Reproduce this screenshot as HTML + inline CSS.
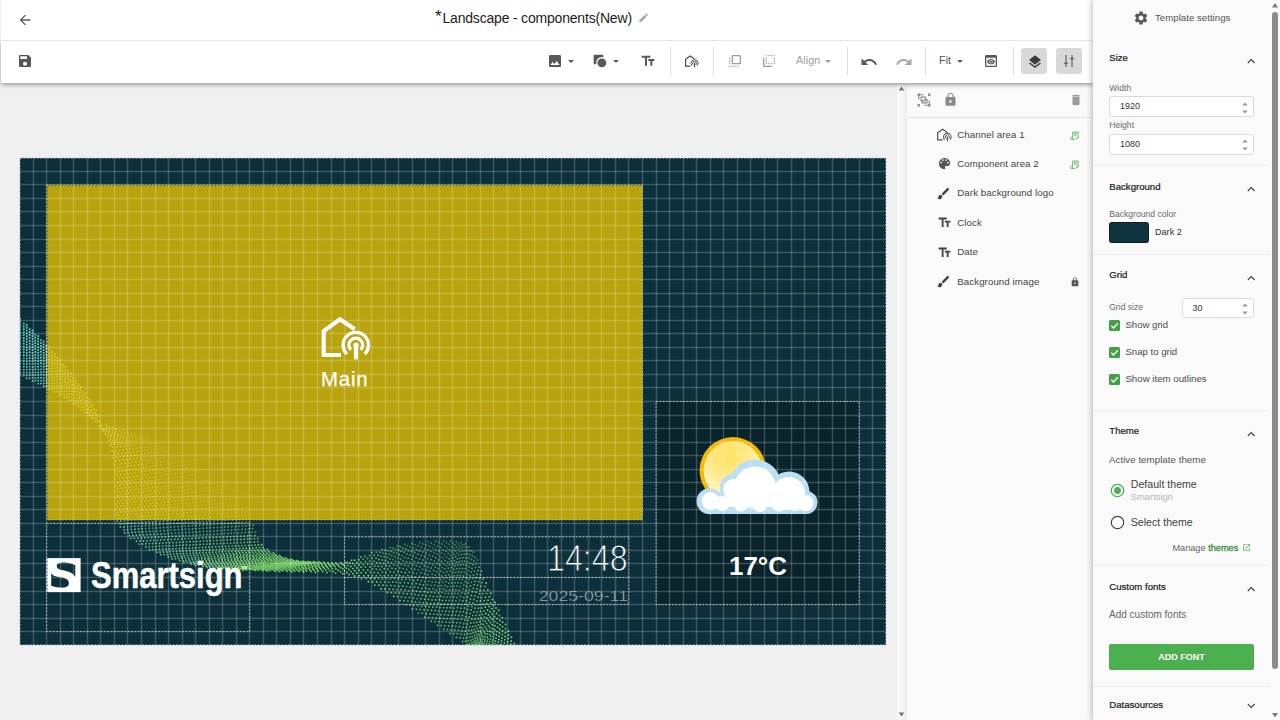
<!DOCTYPE html>
<html lang="en">
<head>
<meta charset="utf-8">
<title>Landscape - components(New)</title>
<style>
*{box-sizing:border-box;margin:0;padding:0}
html,body{width:1280px;height:720px;overflow:hidden}
body{position:relative;background:#f0f0f0;font-family:"Liberation Sans",Arial,sans-serif;color:#333;font-size:12px}
.abs{position:absolute}
svg{display:block}
/* ---------- top bars ---------- */
#topbar{left:1px;top:0;width:1092px;height:40px;background:#fff}
#topline{left:1px;top:40px;width:1092px;height:1px;background:#e6e6e6}
#toolbar{left:1px;top:41px;width:1092px;height:42px;background:#fff;box-shadow:0 2px 4px rgba(0,0,0,.35)}
#title{left:435px;top:6px;height:24px;line-height:24px;font-size:14px;letter-spacing:-.19px;color:#1c1c1c;white-space:nowrap}
.ic{position:absolute;fill:#585858}
.sep{position:absolute;top:47px;width:1px;height:28px;background:#dcdcdc}
.tbtn{position:absolute;top:48px;width:26px;height:26px;border-radius:3px;background:#d9d9d9}
.ttxt{position:absolute;top:51px;height:18px;line-height:18px;font-size:10.8px;letter-spacing:.05px;color:#555;white-space:nowrap}
.caret{position:absolute;width:0;height:0;margin-left:.5px;border-left:3.5px solid transparent;border-right:3.5px solid transparent;border-top:3.8px solid #5c5c5c}
/* ---------- canvas ---------- */
#vscroll{left:897px;top:84px;width:10px;height:636px;background:linear-gradient(to right,#fafafa 0,#f7f7f7 55%,#e9e9e9 100%)}
#stage{left:19.6px;top:157.6px;width:1920px;height:1080px;transform-origin:0 0;transform:scale(.45104);background:#0c303c;overflow:hidden}
#stage .box{position:absolute}
#grid{position:absolute;left:0;top:0;width:1920px;height:1080px}
.outl{position:absolute;border:2.2px dashed rgba(255,255,255,.75)}
/* ---------- layers ---------- */
#layers{left:907px;top:84px;width:186px;height:636px;background:#fafafa}
#layline{left:907px;top:117px;width:186px;height:1px;background:#e4e4e4}
.lrow{position:absolute;left:957.3px;height:16px;line-height:16px;font-size:9.7px;letter-spacing:.08px;color:#454545;white-space:nowrap}
/* ---------- settings ---------- */
#panel{left:1093px;top:0;width:177px;height:720px;background:#fafafa;box-shadow:-2px 0 5px rgba(0,0,0,.22)}
#pscroll{left:1270px;top:0;width:10px;height:720px;background:#fbfbfb}
#pthumb{left:1272px;top:12px;width:6px;height:657px;background:#8c8c8c;border-radius:3px}
.ptitle{position:absolute;left:1109.3px;font-size:9.6px;-webkit-text-stroke:.22px #222;color:#222;height:14px;line-height:14px;white-space:nowrap}
.plabel{position:absolute;left:1109.2px;font-size:8.6px;color:#6a6a6a;height:12px;line-height:12px;white-space:nowrap}
.ptext{position:absolute;font-size:10.5px;color:#4c4c4c;height:14px;line-height:14px;white-space:nowrap}
.pline{position:absolute;left:1093px;width:177px;height:1px;background:#ededed}
.pin{position:absolute;background:#fff;border:1px solid #dadada;border-radius:3px;font-size:9px;color:#333;line-height:19px;padding-left:10px}
.chev{position:absolute;left:1246px;width:10px;height:6px}
.spin{position:absolute;width:8px;height:14px}
.chk{position:absolute;left:1109px;width:11px;height:11px;background:#43a047;border-radius:1.5px}
</style>
</head>
<body>
<!-- ================= canvas area ================= -->
<div class="abs" id="vscroll"></div>
<svg class="abs" style="left:898.3px;top:85.6px" width="7" height="5" viewBox="0 0 8 6"><path d="M4 0.5 7.5 5.5H0.5z" fill="#777"/></svg>
<svg class="abs" style="left:898.3px;top:711.5px" width="7" height="5" viewBox="0 0 8 6"><path d="M0.5 0.5H7.5L4 5.5z" fill="#777"/></svg>

<svg class="abs" style="left:0;top:0" width="1280" height="720" viewBox="0 0 1280 720">
<defs>
<clipPath id="cs"><rect x="19.65" y="157.8" width="866.55" height="487.44"/></clipPath>
<radialGradient id="sun" cx=".42" cy=".25" r=".8"><stop offset="0" stop-color="#ffe35a"/><stop offset=".45" stop-color="#ffe88a"/><stop offset="1" stop-color="#fffbe6"/></radialGradient>
<linearGradient id="wv" gradientUnits="userSpaceOnUse" x1="20" y1="0" x2="260" y2="0"><stop offset="0" stop-color="#72d6c8"/><stop offset=".4" stop-color="#78d2a0"/><stop offset="1" stop-color="#70c860"/></linearGradient>
</defs>
<g clip-path="url(#cs)">
<rect x="19.65" y="157.8" width="866.55" height="487.44" fill="#0c303b"/>
<path d="M150.7 438.4h0M154.3 440.6h0M150.7 440.9h0M157.9 443h0M154.2 443.4h0M161.9 445.4h0M158.4 445.8h0M169.1 447.6h0M165.5 448h0M173.1 450.2h0M169.6 450.7h0M180.1 452.5h0M176.5 452.9h0M172.9 453.4h0M183.2 455.2h0M179.6 455.7h0M176 456.2h0M186.1 458.1h0M182.5 458.6h0M178.8 459.1h0M192.9 460.5h0M189.3 461h0M185.8 461.5h0M182.2 462h0M195.5 463.6h0M191.9 464.1h0M188.3 464.6h0M197.9 466.9h0M194.3 467.4h0M190.8 468h0M203.6 469.7h0M200 470.3h0M196.4 470.8h0M192.9 471.3h0M212.5 472.2h0M209 472.7h0M205.4 473.2h0M201.8 473.7h0M198.3 474.2h0M217.5 475.3h0M213.8 475.8h0M210.1 476.2h0M206.4 476.7h0M222.3 478.3h0M218.6 478.8h0M214.9 479.3h0M211.3 479.7h0M223.2 481.9h0M219.6 482.3h0M227.7 485h0" fill="none" stroke="url(#wv)" stroke-opacity="0.17" stroke-width="1.95" stroke-linecap="round"/>
<path d="M146.8 436.5h0M143.4 436.9h0M147.1 438.8h0M143.6 439.2h0M147.1 441.3h0M143.4 441.7h0M150.5 443.7h0M146.7 444.1h0M143 444.5h0M154.8 446.2h0M151.3 446.6h0M147.7 447h0M161.9 448.5h0M158.2 448.9h0M154.6 449.3h0M150.9 449.7h0M166 451.1h0M162.5 451.5h0M159 452h0M155.5 452.4h0M169.3 453.9h0M165.7 454.4h0M162.1 454.8h0M158.6 455.3h0M172.3 456.7h0M168.7 457.2h0M165.1 457.7h0M161.4 458.2h0M175.1 459.7h0M171.5 460.2h0M167.8 460.7h0M164.1 461.2h0M178.7 462.6h0M175.2 463.1h0M171.6 463.6h0M168.1 464.1h0M164.6 464.6h0M184.8 465.2h0M181.2 465.7h0M177.7 466.2h0M174.1 466.8h0M170.5 467.3h0M167 467.8h0M187.2 468.5h0M183.6 469h0M180 469.5h0M176.5 470.1h0M172.9 470.6h0M169.3 471.1h0M189.3 471.8h0M185.7 472.3h0M182.2 472.9h0M178.6 473.4h0M175 473.9h0M171.4 474.4h0M194.7 474.7h0M191.1 475.2h0M187.6 475.7h0M184 476.2h0M180.4 476.7h0M176.9 477.2h0M202.7 477.2h0M199.1 477.7h0M195.4 478.2h0M191.7 478.7h0M188 479.2h0M184.3 479.7h0M180.6 480.2h0M207.6 480.2h0M204 480.7h0M200.3 481.2h0M196.6 481.6h0M193 482.1h0M189.3 482.6h0M185.7 483h0M216 482.7h0M212.3 483.2h0M208.7 483.6h0M205.1 484.1h0M201.4 484.5h0M197.8 485h0M194.1 485.4h0M190.5 485.9h0M224.1 485.4h0M220.5 485.8h0M216.9 486.2h0M213.3 486.7h0M209.6 487.1h0M206 487.5h0M202.4 487.9h0M198.8 488.3h0M195.2 488.8h0M228.4 488.5h0M224.8 488.9h0M221.3 489.3h0M217.7 489.7h0M214.1 490.1h0M210.5 490.5h0M206.9 490.9h0M203.4 491.3h0M199.8 491.7h0M232.6 491.7h0M229 492.1h0M225.3 492.4h0M221.7 492.8h0M218 493.2h0M214.3 493.6h0M210.7 494h0M207 494.4h0M203.4 494.7h0M233.2 495.2h0M229.5 495.6h0M225.9 495.9h0M222.3 496.3h0M218.7 496.6h0M215.1 497h0M211.5 497.4h0M237.3 498.4h0M233.6 498.8h0M229.9 499.1h0M226.2 499.4h0M222.5 499.8h0M218.8 500.1h0M237.7 501.9h0M234 502.3h0M230.4 502.6h0M226.8 502.9h0M241.7 505.1h0M238.1 505.4h0M234.5 505.7h0" fill="none" stroke="url(#wv)" stroke-opacity="0.33" stroke-width="1.95" stroke-linecap="round"/>
<path d="M135.2 433.3h0M131.7 433.8h0M139.2 435.1h0M135.6 435.5h0M131.9 435.9h0M139.9 437.2h0M136.5 437.6h0M133.1 438h0M140 439.5h0M136.5 439.9h0M133 440.3h0M139.8 442.1h0M136.2 442.4h0M132.5 442.8h0M139.3 444.9h0M135.6 445.3h0M144.1 447.4h0M140.6 447.8h0M137 448.2h0M147.3 450.1h0M143.7 450.6h0M140 451h0M152 452.8h0M148.5 453.3h0M145 453.7h0M141.4 454.2h0M155 455.8h0M151.4 456.3h0M147.8 456.7h0M144.2 457.2h0M157.8 458.8h0M154.2 459.3h0M150.5 459.8h0M146.9 460.3h0M143.3 460.8h0M160.5 461.8h0M156.8 462.3h0M153.1 462.8h0M149.5 463.4h0M145.8 463.9h0M161 465.2h0M157.5 465.7h0M153.9 466.2h0M150.4 466.7h0M146.9 467.2h0M163.4 468.4h0M159.9 468.9h0M156.3 469.4h0M152.8 469.9h0M149.2 470.5h0M165.7 471.7h0M162.2 472.2h0M158.6 472.7h0M155 473.2h0M151.5 473.8h0M147.9 474.3h0M167.9 474.9h0M164.3 475.5h0M160.7 476h0M157.1 476.5h0M153.6 477h0M150 477.5h0M173.3 477.7h0M169.7 478.2h0M166.2 478.8h0M162.6 479.3h0M159 479.8h0M155.5 480.3h0M151.9 480.8h0M177 480.7h0M173.3 481.2h0M169.6 481.7h0M165.9 482.2h0M162.2 482.7h0M158.6 483.2h0M154.9 483.7h0M182 483.5h0M178.4 484h0M174.7 484.5h0M171 484.9h0M167.4 485.4h0M163.7 485.9h0M160.1 486.4h0M156.4 486.8h0M186.9 486.3h0M183.2 486.8h0M179.6 487.2h0M176 487.7h0M172.3 488.1h0M168.7 488.6h0M165.1 489h0M161.4 489.5h0M191.6 489.2h0M188 489.6h0M184.4 490h0M180.8 490.5h0M177.2 490.9h0M173.6 491.3h0M170 491.7h0M166.4 492.1h0M162.7 492.6h0M196.2 492.1h0M192.6 492.5h0M189.1 492.9h0M185.5 493.3h0M181.9 493.7h0M178.3 494.1h0M174.7 494.5h0M171.2 494.9h0M167.6 495.3h0M164 495.7h0M199.7 495.1h0M196.1 495.5h0M192.4 495.9h0M188.7 496.3h0M185.1 496.7h0M181.4 497h0M177.8 497.4h0M174.1 497.8h0M170.4 498.2h0M166.8 498.6h0M207.8 497.7h0M204.2 498.1h0M200.6 498.4h0M197 498.8h0M193.4 499.2h0M189.7 499.5h0M186.1 499.9h0M182.5 500.2h0M178.9 500.6h0M175.3 500.9h0M171.6 501.3h0M215.1 500.5h0M211.4 500.8h0M207.8 501.2h0M204.1 501.5h0M200.4 501.8h0M196.7 502.2h0M193 502.5h0M189.3 502.9h0M185.6 503.2h0M181.9 503.6h0M178.3 503.9h0M174.6 504.2h0M223.1 503.2h0M219.5 503.5h0M215.8 503.9h0M212.2 504.2h0M208.5 504.5h0M204.9 504.8h0M201.3 505.1h0M197.6 505.4h0M194 505.8h0M190.3 506.1h0M186.7 506.4h0M183.1 506.7h0M179.4 507h0M230.9 506h0M227.3 506.3h0M223.7 506.6h0M220.1 506.9h0M216.5 507.2h0M213 507.5h0M209.4 507.8h0M205.8 508.1h0M202.2 508.4h0M198.6 508.7h0M195 509h0M191.4 509.3h0M187.8 509.6h0M184.2 509.9h0M242 508.6h0M238.4 508.9h0M234.7 509.2h0M231.1 509.5h0M227.5 509.8h0M223.8 510.1h0M220.2 510.3h0M216.6 510.6h0M212.9 510.9h0M209.3 511.2h0M205.6 511.5h0M202 511.7h0M198.4 512h0M194.7 512.3h0M191.1 512.6h0M246 511.8h0M242.3 512.1h0M238.6 512.4h0M234.9 512.7h0M231.3 512.9h0M227.6 513.2h0M223.9 513.5h0M220.2 513.7h0M216.6 514h0M212.9 514.3h0M209.2 514.5h0M205.5 514.8h0M201.9 515.1h0M198.2 515.3h0M246.3 515.3h0M242.7 515.5h0M239.1 515.8h0M235.5 516h0M231.9 516.3h0M228.3 516.5h0M224.7 516.8h0M221.1 517h0M217.5 517.3h0M213.9 517.5h0M210.3 517.8h0M206.7 518h0M250.1 518.5h0M246.5 518.8h0M242.9 519h0M239.3 519.3h0M235.7 519.5h0M232.1 519.7h0M228.5 520h0M224.9 520.2h0M221.3 520.4h0M250 522h0M246.4 522.3h0M242.8 522.5h0M404.7 544.5h0M407.4 545.6h0M411.9 543.4h0M410.2 546.9h0M414.8 544.6h0M413.2 548.1h0M419.6 542.4h0M418 545.8h0M416.4 549.2h0M422.8 543.7h0M421.1 547.3h0M427.7 541.6h0M426.1 545h0M424.5 548.5h0M431 542.9h0M429.4 546.3h0M427.8 549.7h0M435.9 540.9h0M434.2 544.4h0M432.6 548h0M430.9 551.5h0M439 542.4h0M437.4 545.9h0M435.8 549.4h0M434.2 552.9h0M443.6 540.6h0M442 544h0M440.5 547.4h0M438.9 550.9h0M437.4 554.3h0M446.4 542.4h0M444.8 545.9h0M443.2 549.4h0M441.6 553h0M440.1 556.5h0M450.5 540.8h0M449 544.3h0M447.5 547.7h0M446 551.2h0M444.5 554.6h0M442.9 558h0M452.8 543h0M451.3 546.5h0M449.8 550h0M448.3 553.5h0M446.8 557h0M456.3 541.6h0M454.9 545h0M453.5 548.4h0M452 551.9h0M450.6 555.3h0M458.1 543.7h0M456.7 547.2h0M455.3 550.7h0M453.9 554.2h0M461.1 542.5h0M459.7 546h0M458.4 549.6h0M457 553.2h0M462.6 544.9h0M461.3 548.3h0M460 551.8h0M458.8 555.3h0M465.2 544h0M464 547.5h0M462.8 551.1h0M466.6 547h0M465.4 550.6h0M469.2 546.9h0M468 550.5h0" fill="none" stroke="url(#wv)" stroke-opacity="0.5" stroke-width="1.95" stroke-linecap="round"/>
<path d="M123.4 430.3h0M119.8 431h0M127.7 432.1h0M124.4 432.6h0M121.1 433.1h0M128.3 434.3h0M124.8 434.7h0M121.3 435.2h0M128.3 436.4h0M124.6 436.8h0M129.7 438.4h0M126.2 438.7h0M122.8 439.1h0M129.4 440.6h0M125.9 441h0M122.3 441.4h0M128.9 443.2h0M125.3 443.5h0M121.6 443.9h0M131.9 445.7h0M128.2 446.1h0M124.5 446.4h0M133.5 448.5h0M129.9 448.9h0M126.4 449.3h0M136.4 451.4h0M132.8 451.8h0M129.1 452.3h0M125.5 452.7h0M137.9 454.6h0M134.4 455h0M130.9 455.5h0M127.4 455.9h0M140.7 457.7h0M137.1 458.2h0M133.5 458.6h0M129.9 459.1h0M126.3 459.6h0M139.7 461.3h0M136 461.8h0M132.4 462.3h0M128.8 462.8h0M142.1 464.4h0M138.5 464.9h0M134.8 465.5h0M131.1 466h0M127.5 466.5h0M143.3 467.8h0M139.8 468.3h0M136.2 468.8h0M132.7 469.3h0M129.2 469.8h0M145.6 471h0M142.1 471.5h0M138.5 472.1h0M135 472.6h0M131.4 473.1h0M127.8 473.6h0M144.3 474.8h0M140.7 475.4h0M137.2 475.9h0M133.6 476.4h0M130 476.9h0M146.4 478.1h0M142.8 478.6h0M139.3 479.1h0M135.7 479.6h0M132.1 480.1h0M128.5 480.7h0M148.3 481.3h0M144.8 481.8h0M141.2 482.3h0M137.6 482.8h0M134.1 483.3h0M130.5 483.8h0M151.2 484.2h0M147.5 484.7h0M143.8 485.2h0M140.2 485.7h0M136.5 486.2h0M132.8 486.7h0M129.1 487.2h0M152.7 487.3h0M149.1 487.8h0M145.4 488.3h0M141.8 488.7h0M138.1 489.2h0M134.4 489.7h0M130.8 490.2h0M157.8 489.9h0M154.2 490.4h0M150.5 490.8h0M146.9 491.3h0M143.3 491.7h0M139.6 492.2h0M136 492.6h0M132.4 493.1h0M128.7 493.5h0M159.1 493h0M155.5 493.4h0M151.9 493.8h0M148.3 494.3h0M144.7 494.7h0M141.1 495.1h0M137.5 495.5h0M133.9 496h0M130.3 496.4h0M160.4 496.1h0M156.8 496.4h0M153.3 496.8h0M149.7 497.2h0M146.1 497.6h0M142.5 498h0M139 498.4h0M135.4 498.8h0M131.8 499.2h0M163.1 499h0M159.5 499.3h0M155.8 499.7h0M152.2 500.1h0M148.5 500.5h0M144.8 500.9h0M141.2 501.3h0M137.5 501.6h0M133.9 502h0M130.2 502.4h0M168 501.7h0M164.4 502h0M160.8 502.4h0M157.2 502.7h0M153.5 503.1h0M149.9 503.4h0M146.3 503.8h0M142.7 504.2h0M139.1 504.5h0M135.4 504.9h0M131.8 505.2h0M170.9 504.6h0M167.2 504.9h0M163.5 505.3h0M159.8 505.6h0M156.1 506h0M152.4 506.3h0M148.8 506.6h0M145.1 507h0M141.4 507.3h0M137.7 507.7h0M134 508h0M130.3 508.4h0M175.8 507.4h0M172.1 507.7h0M168.5 508h0M164.9 508.3h0M161.2 508.6h0M157.6 508.9h0M153.9 509.3h0M150.3 509.6h0M146.7 509.9h0M143 510.2h0M139.4 510.5h0M135.7 510.9h0M132.1 511.2h0M180.6 510.2h0M177.1 510.5h0M173.5 510.8h0M169.9 511.1h0M166.3 511.4h0M162.7 511.6h0M159.1 511.9h0M155.5 512.2h0M151.9 512.5h0M148.3 512.8h0M144.7 513.1h0M141.2 513.4h0M137.6 513.7h0M134 514h0M130.4 514.3h0M187.5 512.9h0M183.8 513.2h0M180.2 513.4h0M176.6 513.7h0M172.9 514h0M169.3 514.3h0M165.6 514.6h0M162 514.8h0M158.4 515.1h0M154.7 515.4h0M151.1 515.7h0M147.5 516h0M143.8 516.3h0M140.2 516.5h0M136.5 516.8h0M132.9 517.1h0M194.5 515.6h0M190.8 515.9h0M187.2 516.1h0M183.5 516.4h0M179.8 516.7h0M176.1 516.9h0M172.5 517.2h0M168.8 517.5h0M165.1 517.8h0M161.5 518h0M157.8 518.3h0M154.1 518.6h0M150.4 518.8h0M146.8 519.1h0M143.1 519.4h0M139.4 519.6h0M135.7 519.9h0M132.1 520.2h0M203.1 518.3h0M199.5 518.5h0M195.9 518.8h0M192.3 519h0M188.7 519.3h0M185.1 519.5h0M181.5 519.8h0M177.9 520h0M174.3 520.3h0M170.7 520.5h0M167.1 520.8h0M163.5 521h0M159.9 521.3h0M156.3 521.5h0M152.8 521.8h0M149.2 522h0M145.6 522.3h0M142 522.5h0M138.4 522.8h0M134.8 523h0M217.6 520.7h0M214 520.9h0M210.4 521.2h0M206.8 521.4h0M203.2 521.6h0M199.6 521.9h0M196 522.1h0M192.4 522.3h0M188.8 522.6h0M185.2 522.8h0M181.6 523.1h0M178 523.3h0M174.4 523.5h0M170.8 523.8h0M167.1 524h0M163.5 524.2h0M159.9 524.5h0M156.3 524.7h0M152.7 525h0M149.1 525.2h0M145.5 525.4h0M141.9 525.7h0M138.3 525.9h0M239.2 522.7h0M235.6 522.9h0M232 523.2h0M228.4 523.4h0M224.8 523.6h0M221.2 523.8h0M217.6 524.1h0M214 524.3h0M210.4 524.5h0M206.8 524.7h0M203.2 525h0M199.6 525.2h0M196 525.4h0M192.4 525.6h0M188.8 525.9h0M185.2 526.1h0M181.6 526.3h0M178.1 526.5h0M174.5 526.8h0M170.9 527h0M167.3 527.2h0M163.7 527.4h0M160.1 527.7h0M156.5 527.9h0M152.9 528.1h0M149.3 528.3h0M145.7 528.6h0M253.2 525.3h0M249.6 525.5h0M246.1 525.7h0M242.5 525.9h0M238.9 526.2h0M235.4 526.4h0M231.8 526.6h0M228.2 526.8h0M224.7 527h0M221.1 527.2h0M217.5 527.4h0M213.9 527.6h0M210.4 527.8h0M206.8 528h0M203.2 528.3h0M199.7 528.5h0M196.1 528.7h0M192.5 528.9h0M189 529.1h0M185.4 529.3h0M181.8 529.5h0M178.3 529.7h0M174.7 529.9h0M171.1 530.1h0M167.6 530.4h0M164 530.6h0M160.4 530.8h0M156.8 531h0M153.3 531.2h0M252.6 528.8h0M249.1 529h0M245.6 529.2h0M242.1 529.4h0M238.6 529.6h0M235 529.7h0M231.5 529.9h0M228 530.1h0M224.5 530.3h0M220.9 530.5h0M217.4 530.7h0M213.9 530.9h0M210.4 531.1h0M206.8 531.3h0M203.3 531.5h0M199.8 531.7h0M196.3 531.9h0M192.8 532.1h0M189.2 532.3h0M185.7 532.5h0M182.2 532.7h0M178.7 532.9h0M175.1 533.1h0M171.6 533.3h0M168.1 533.5h0M164.6 533.7h0M255.5 532h0M252 532.2h0M248.6 532.4h0M245.1 532.5h0M241.6 532.7h0M238.2 532.9h0M234.7 533.1h0M231.3 533.3h0M227.8 533.5h0M224.3 533.6h0M220.9 533.8h0M217.4 534h0M214 534.2h0M210.5 534.4h0M207 534.5h0M203.6 534.7h0M200.1 534.9h0M196.7 535.1h0M193.2 535.3h0M189.7 535.4h0M186.3 535.6h0M376.3 552.2h0M382.2 549.4h0M380.1 552.3h0M378.1 555.3h0M385.2 550h0M383.1 553.1h0M381 556.3h0M390.2 547.4h0M388.2 550.6h0M386.2 553.7h0M384.2 556.8h0M393 548.1h0M391.1 551.2h0M389.3 554.3h0M387.4 557.3h0M397.5 545.8h0M395.6 549.1h0M393.7 552.4h0M391.8 555.7h0M390 558.9h0M400.2 546.8h0M398.4 550h0M396.7 553.2h0M394.9 556.4h0M393.1 559.6h0M391.3 562.8h0M402.9 547.9h0M401 551.3h0M399.2 554.7h0M397.4 558.1h0M395.6 561.5h0M393.8 564.9h0M405.7 548.9h0M404 552.3h0M402.3 555.6h0M400.6 558.9h0M398.8 562.3h0M397.1 565.6h0M408.4 550.4h0M406.7 553.9h0M404.9 557.4h0M403.2 560.9h0M401.4 564.4h0M399.7 567.9h0M411.5 551.5h0M409.8 554.9h0M408.1 558.3h0M406.5 561.8h0M404.8 565.2h0M403.1 568.6h0M414.8 552.5h0M413.1 555.9h0M411.5 559.3h0M409.9 562.6h0M408.3 566h0M406.7 569.4h0M419.5 550.8h0M417.8 554.3h0M416.1 557.8h0M414.5 561.4h0M412.8 564.9h0M411.1 568.4h0M409.4 571.9h0M422.8 551.9h0M421.2 555.4h0M419.6 558.9h0M418 562.3h0M416.3 565.8h0M414.7 569.3h0M413.1 572.7h0M426.2 553.1h0M424.6 556.5h0M423.1 559.9h0M421.5 563.3h0M419.9 566.7h0M418.3 570.1h0M416.7 573.6h0M415.1 577h0M429.3 555.1h0M427.6 558.6h0M426 562.1h0M424.3 565.7h0M422.7 569.2h0M421 572.8h0M419.4 576.3h0M432.6 556.3h0M431 559.8h0M429.4 563.3h0M427.8 566.8h0M426.2 570.3h0M424.5 573.7h0M422.9 577.2h0M421.3 580.7h0M435.8 557.7h0M434.2 561.1h0M432.7 564.5h0M431.1 567.9h0M429.5 571.3h0M428 574.7h0M426.4 578.2h0M424.9 581.6h0M438.5 560h0M436.9 563.5h0M435.3 567h0M433.7 570.5h0M432.1 574.1h0M430.5 577.6h0M429 581.1h0M427.4 584.6h0M441.4 561.5h0M439.9 564.9h0M438.4 568.4h0M436.8 571.8h0M435.3 575.2h0M433.8 578.7h0M432.3 582.1h0M430.7 585.5h0M445.2 560.6h0M443.7 564.1h0M442.2 567.6h0M440.7 571.1h0M439.2 574.6h0M437.6 578.1h0M436.1 581.7h0M434.6 585.2h0M433.1 588.7h0M449.2 558.7h0M447.8 562.2h0M446.3 565.6h0M444.9 569h0M443.5 572.5h0M442 575.9h0M440.6 579.4h0M439.2 582.8h0M437.7 586.2h0M436.3 589.7h0M452.5 557.8h0M451.1 561.3h0M449.7 564.8h0M448.3 568.3h0M446.9 571.8h0M445.5 575.3h0M444.1 578.8h0M442.7 582.3h0M441.3 585.8h0M439.9 589.3h0M438.5 592.9h0M455.6 556.8h0M454.3 560.4h0M452.9 563.9h0M451.6 567.5h0M450.2 571.1h0M448.8 574.7h0M447.5 578.3h0M446.1 581.8h0M444.8 585.4h0M443.4 589h0M442 592.6h0M457.5 558.8h0M456.3 562.3h0M455 565.8h0M453.8 569.2h0M452.5 572.7h0M451.3 576.2h0M450 579.7h0M448.8 583.2h0M447.5 586.7h0M446.2 590.1h0M445 593.6h0M461.6 554.6h0M460.4 558.1h0M459.2 561.7h0M458 565.2h0M456.8 568.7h0M455.6 572.3h0M454.3 575.8h0M453.1 579.3h0M451.9 582.9h0M450.7 586.4h0M449.5 589.9h0M448.3 593.5h0M447.1 597h0M464.3 554.1h0M463.1 557.7h0M462 561.3h0M460.8 564.8h0M459.7 568.4h0M458.5 572h0M457.4 575.5h0M456.2 579.1h0M455.1 582.7h0M453.9 586.3h0M452.8 589.8h0M451.6 593.4h0M450.4 597h0M466.9 554h0M465.8 557.6h0M464.7 561.2h0M463.6 564.8h0M462.5 568.4h0M461.4 572h0M460.3 575.5h0M459.2 579.1h0M458.1 582.7h0M457 586.3h0M455.9 589.9h0M454.8 593.5h0M453.7 597h0M452.6 600.6h0M470.7 550.9h0M469.7 554.5h0M468.6 558h0M467.6 561.6h0M466.5 565.2h0M465.5 568.8h0M464.4 572.3h0M463.3 575.9h0M462.3 579.5h0M461.2 583.1h0M460.2 586.6h0M459.1 590.2h0M458.1 593.8h0M457 597.4h0M455.9 600.9h0M473.5 552.1h0M472.4 555.8h0M471.4 559.5h0M470.3 563.2h0M469.2 566.9h0M468.2 570.6h0M467.1 574.3h0M466 577.9h0M465 581.6h0M463.9 585.3h0M462.9 589h0M461.8 592.7h0M460.7 596.4h0M459.7 600.1h0M475 557.5h0M474 561.2h0M473 564.8h0M472 568.4h0M471 572h0M470 575.7h0M468.9 579.3h0M467.9 582.9h0M466.9 586.5h0M465.9 590.2h0M464.9 593.8h0M477.4 560.1h0M476.4 563.8h0M475.4 567.5h0M474.4 571.2h0M473.4 574.9h0M472.4 578.5h0M471.4 582.2h0" fill="none" stroke="url(#wv)" stroke-opacity="0.67" stroke-width="1.95" stroke-linecap="round"/>
<path d="M20 358.1h0M20 360.9h0M20 363.7h0M20 366.5h0M20 369.4h0M20 372.2h0M20 375h0M23.8 358.1h0M23.8 361h0M23.8 363.8h0M23.8 366.7h0M23.8 369.6h0M23.8 372.5h0M23.8 375.4h0M26.8 358.6h0M26.8 361.4h0M26.8 364.2h0M26.8 367h0M26.8 369.8h0M26.8 372.6h0M26.8 375.4h0M26.8 378.2h0M29.7 360.9h0M29.7 363.7h0M29.7 366.6h0M29.7 369.5h0M29.7 372.4h0M29.7 375.3h0M29.7 378.2h0M32.6 361.3h0M32.6 364.1h0M32.6 366.9h0M32.6 369.7h0M32.6 372.5h0M32.6 375.3h0M32.6 378.1h0M32.6 380.9h0M35.4 363.5h0M35.4 366.4h0M35.4 369.3h0M35.4 372.2h0M35.4 375.1h0M35.4 378h0M35.4 380.8h0M38.2 364h0M38.2 366.8h0M38.2 369.6h0M38.2 372.4h0M38.2 375.2h0M38.2 378h0M38.2 380.8h0M38.2 383.6h0M41 366.2h0M41 369.1h0M41 371.9h0M41 374.8h0M41 377.7h0M41 380.6h0M41 383.5h0M43.7 369.5h0M43.7 372.3h0M43.7 375.1h0M43.7 377.9h0M43.7 380.7h0M43.7 383.5h0M43.7 386.3h0M46.3 368.9h0M46.3 371.8h0M46.4 374.7h0M46.4 377.5h0M46.4 380.4h0M46.4 383.3h0M46.4 386.2h0M49 371.1h0M49 374.1h0M49 377.1h0M49 380.1h0M49 383.1h0M49 386h0M49 389h0M51.7 374.7h0M51.7 377.5h0M51.7 380.4h0M51.7 383.3h0M51.6 386.1h0M51.6 389h0M54.4 377.1h0M54.3 380h0M54.3 382.9h0M54.3 385.9h0M54.2 388.8h0M54.2 391.8h0M57 379.5h0M56.9 382.5h0M56.9 385.6h0M56.8 388.6h0M56.8 391.6h0M59.6 380.1h0M59.6 383h0M59.5 385.9h0M59.4 388.8h0M59.3 391.6h0M59.3 394.5h0M62.2 382.6h0M62.1 385.5h0M62 388.5h0M61.9 391.4h0M61.8 394.4h0M64.7 385.1h0M64.6 388.1h0M64.4 391.2h0M64.3 394.2h0M64.2 397.3h0M67.1 388.7h0M67 391.6h0M66.8 394.4h0M66.6 397.3h0M69.5 391.3h0M69.3 394.3h0M69.1 397.3h0M68.9 400.3h0M71.9 394h0M71.6 397.1h0M71.3 400.3h0M74.3 394.7h0M74 397.6h0M73.7 400.5h0M73.4 403.4h0M76.6 397.4h0M76.2 400.4h0M75.7 403.5h0M78.5 401h0M78 403.8h0M77.6 406.6h0M80.4 403.7h0M79.8 406.6h0M82.1 406.4h0M81.4 409.6h0M83.6 409.7h0M84.9 412.6h0M88.2 415.4h0M112.5 427.3h0M115.7 429.1h0M112.5 430h0M116.2 431.7h0M112.6 432.5h0M117.9 433.6h0M114.6 434.2h0M117.8 435.7h0M114.3 436.1h0M121 437.2h0M117.4 437.7h0M113.7 438.1h0M119.4 439.5h0M116 439.9h0M112.5 440.2h0M118.8 441.7h0M115.2 442.1h0M118 444.3h0M114.4 444.7h0M120.7 446.8h0M117 447.2h0M113.3 447.6h0M122.8 449.7h0M119.3 450.1h0M115.7 450.5h0M121.9 453.1h0M118.2 453.5h0M114.6 454h0M123.9 456.3h0M120.3 456.8h0M116.8 457.2h0M113.3 457.7h0M122.8 460h0M119.2 460.5h0M115.6 461h0M125.1 463.3h0M121.5 463.8h0M117.9 464.3h0M114.2 464.8h0M123.8 467h0M120.1 467.6h0M116.5 468.1h0M125.6 470.4h0M122.1 470.9h0M118.6 471.4h0M115 471.9h0M124.3 474.2h0M120.7 474.7h0M117.2 475.2h0M126.4 477.5h0M122.9 478h0M119.3 478.5h0M115.7 479.1h0M125 481.2h0M121.4 481.7h0M117.8 482.2h0M126.9 484.3h0M123.3 484.8h0M119.8 485.3h0M116.2 485.8h0M125.4 487.7h0M121.7 488.2h0M118.1 488.7h0M127.1 490.6h0M123.5 491.1h0M119.8 491.6h0M116.1 492.1h0M125.1 494h0M121.5 494.4h0M117.8 494.9h0M126.7 496.8h0M123.1 497.2h0M119.5 497.6h0M115.8 498.1h0M128.2 499.6h0M124.6 500h0M121.1 500.4h0M117.5 500.8h0M126.6 502.8h0M122.9 503.2h0M119.2 503.6h0M115.6 503.9h0M128.2 505.6h0M124.6 505.9h0M121 506.3h0M117.3 506.7h0M126.6 508.7h0M122.9 509h0M119.3 509.4h0M115.6 509.7h0M128.5 511.5h0M124.8 511.8h0M121.2 512.1h0M117.5 512.5h0M126.8 514.6h0M123.2 514.9h0M119.6 515.2h0M116 515.5h0M129.3 517.4h0M125.6 517.7h0M122 517.9h0M118.4 518.2h0M128.4 520.4h0M124.7 520.7h0M121 521h0M117.4 521.2h0M131.2 523.3h0M127.6 523.5h0M124 523.8h0M120.4 524h0M134.7 526.2h0M131.1 526.4h0M127.5 526.6h0M123.9 526.9h0M120.3 527.1h0M142.1 528.8h0M138.5 529h0M134.9 529.2h0M131.3 529.5h0M127.7 529.7h0M124.1 529.9h0M149.7 531.4h0M146.1 531.6h0M142.6 531.8h0M139 532h0M135.4 532.3h0M131.9 532.5h0M128.3 532.7h0M124.7 532.9h0M161.1 533.9h0M157.5 534.1h0M154 534.2h0M150.5 534.4h0M147 534.6h0M143.4 534.8h0M139.9 535h0M136.4 535.2h0M132.9 535.4h0M129.3 535.6h0M182.8 535.8h0M179.4 536h0M175.9 536.2h0M172.4 536.3h0M169 536.5h0M165.5 536.7h0M162.1 536.9h0M158.6 537.1h0M155.1 537.2h0M151.7 537.4h0M148.2 537.6h0M144.8 537.8h0M141.3 538h0M137.8 538.2h0M134.4 538.3h0M130.9 538.5h0M254.8 535.4h0M251.3 535.6h0M247.9 535.7h0M244.4 535.9h0M240.9 536.1h0M237.4 536.3h0M233.9 536.4h0M230.5 536.6h0M227 536.8h0M223.5 536.9h0M220 537.1h0M216.5 537.3h0M213.1 537.4h0M209.6 537.6h0M206.1 537.8h0M202.6 538h0M199.1 538.1h0M195.7 538.3h0M192.2 538.5h0M188.7 538.6h0M185.2 538.8h0M181.7 539h0M178.2 539.2h0M174.8 539.3h0M171.3 539.5h0M167.8 539.7h0M164.3 539.8h0M160.8 540h0M157.4 540.2h0M153.9 540.4h0M150.4 540.5h0M146.9 540.7h0M143.4 540.9h0M140 541h0M136.5 541.2h0M257.8 538.6h0M254.4 538.7h0M251 538.9h0M247.7 539h0M244.3 539.2h0M240.9 539.4h0M237.5 539.5h0M234.1 539.7h0M230.7 539.8h0M227.3 540h0M223.9 540.1h0M220.5 540.3h0M217.1 540.5h0M213.7 540.6h0M210.3 540.8h0M207 540.9h0M203.6 541.1h0M200.2 541.3h0M196.8 541.4h0M193.4 541.6h0M190 541.7h0M186.6 541.9h0M183.2 542h0M179.8 542.2h0M176.4 542.4h0M173 542.5h0M169.6 542.7h0M166.3 542.8h0M162.9 543h0M159.5 543.2h0M156.1 543.3h0M152.7 543.5h0M149.3 543.6h0M145.9 543.8h0M142.5 543.9h0M139.1 544.1h0M257.8 541.8h0M254.4 542h0M251 542.1h0M247.6 542.3h0M244.2 542.4h0M240.8 542.6h0M237.4 542.8h0M234 542.9h0M230.6 543.1h0M227.3 543.2h0M223.9 543.4h0M220.5 543.5h0M217.1 543.7h0M213.7 543.8h0M210.3 544h0M206.9 544.1h0M203.5 544.3h0M200.1 544.4h0M196.7 544.6h0M193.3 544.7h0M189.9 544.9h0M186.5 545h0M183.1 545.2h0M179.7 545.3h0M176.4 545.5h0M173 545.7h0M169.6 545.8h0M166.2 546h0M162.8 546.1h0M159.4 546.3h0M156 546.4h0M152.6 546.6h0M149.2 546.7h0M145.8 546.9h0M251.9 545.2h0M248.6 545.4h0M245.3 545.5h0M242 545.7h0M238.7 545.8h0M235.4 545.9h0M232.1 546.1h0M228.8 546.2h0M225.5 546.4h0M222.2 546.5h0M218.9 546.7h0M215.6 546.8h0M212.3 547h0M209 547.1h0M205.7 547.3h0M202.4 547.4h0M199.1 547.6h0M195.8 547.7h0M192.5 547.9h0M189.2 548h0M185.9 548.2h0M182.6 548.3h0M179.3 548.4h0M176 548.6h0M172.7 548.7h0M169.4 548.9h0M166.1 549h0M162.7 549.2h0M159.4 549.3h0M156.1 549.5h0M152.8 549.6h0M149.5 549.8h0M239.7 548.5h0M236.4 548.7h0M233.1 548.8h0M229.7 549h0M226.4 549.1h0M223.1 549.3h0M219.8 549.4h0M216.5 549.6h0M213.2 549.7h0M209.9 549.9h0M206.5 550h0M203.2 550.2h0M199.9 550.4h0M196.6 550.5h0M193.3 550.7h0M190 550.8h0M186.6 551h0M183.3 551.1h0M180 551.3h0M176.7 551.4h0M173.4 551.6h0M170.1 551.7h0M166.8 551.9h0M163.4 552h0M160.1 552.2h0M156.8 552.3h0M231.9 551.3h0M228.7 551.4h0M225.4 551.6h0M222.2 551.8h0M219 551.9h0M215.8 552.1h0M212.5 552.2h0M209.3 552.4h0M206.1 552.6h0M202.8 552.7h0M199.6 552.9h0M196.4 553h0M193.1 553.2h0M189.9 553.4h0M186.7 553.5h0M183.5 553.7h0M180.2 553.8h0M177 554h0M173.8 554.1h0M170.5 554.3h0M167.3 554.5h0M164.1 554.6h0M160.8 554.8h0M223.3 553.9h0M220.1 554.1h0M216.9 554.2h0M213.6 554.4h0M210.4 554.6h0M207.1 554.8h0M203.9 554.9h0M200.6 555.1h0M197.4 555.3h0M194.1 555.5h0M190.9 555.6h0M187.7 555.8h0M184.4 556h0M181.2 556.2h0M177.9 556.3h0M174.7 556.5h0M171.4 556.7h0M168.2 556.9h0M214.7 556.4h0M211.5 556.6h0M208.2 556.8h0M204.9 557h0M201.7 557.2h0M198.4 557.4h0M195.1 557.6h0M191.9 557.7h0M188.6 557.9h0M185.4 558.1h0M182.1 558.3h0M178.8 558.5h0M175.6 558.7h0M172.3 558.9h0M201.9 559.1h0M198.7 559.4h0M195.6 559.6h0M192.4 559.8h0M189.2 560h0M186 560.2h0M182.9 560.4h0M179.7 560.6h0M187.1 562.1h0M183.9 562.3h0M360.8 556.9h0M365.1 556.2h0M363.1 559.1h0M361 562.1h0M371.7 552.7h0M369.6 555.6h0M367.5 558.5h0M365.4 561.4h0M363.2 564.4h0M374.1 555.2h0M372 558.1h0M369.8 561.1h0M367.7 564h0M365.5 567h0M363.4 569.9h0M376.1 558.2h0M374 561.1h0M372 564.1h0M369.9 567h0M367.9 569.9h0M378.9 559.5h0M376.8 562.7h0M374.7 565.9h0M372.5 569h0M370.4 572.2h0M382.3 559.9h0M380.3 563h0M378.3 566.2h0M376.3 569.3h0M374.3 572.4h0M372.4 575.5h0M385.5 560.4h0M383.7 563.5h0M381.8 566.5h0M380 569.6h0M378.1 572.7h0M376.3 575.7h0M388.1 562.2h0M386.2 565.5h0M384.3 568.8h0M382.4 572h0M380.5 575.3h0M378.6 578.6h0M389.5 566h0M387.8 569.2h0M386 572.5h0M384.2 575.7h0M382.4 578.9h0M380.6 582.1h0M392 568.3h0M390.2 571.7h0M388.4 575.1h0M386.6 578.5h0M384.7 581.9h0M395.4 568.9h0M393.7 572.3h0M392 575.6h0M390.3 578.9h0M388.6 582.2h0M386.8 585.6h0M397.9 571.4h0M396.2 574.9h0M394.4 578.4h0M392.7 581.9h0M390.9 585.4h0M389.2 588.9h0M401.4 572.1h0M399.8 575.5h0M398.1 578.9h0M396.4 582.3h0M394.7 585.8h0M393.1 589.2h0M405.1 572.7h0M403.4 576.1h0M401.8 579.5h0M400.2 582.8h0M398.6 586.2h0M397 589.6h0M395.4 592.9h0M407.8 575.4h0M406.1 579h0M404.4 582.5h0M402.7 586h0M401.1 589.5h0M399.4 593.1h0M397.7 596.6h0M411.4 576.2h0M409.8 579.6h0M408.2 583.1h0M406.5 586.6h0M404.9 590h0M403.3 593.5h0M401.6 596.9h0M413.5 580.4h0M411.9 583.8h0M410.3 587.2h0M408.7 590.6h0M407.1 594h0M405.5 597.4h0M403.9 600.8h0M417.7 579.8h0M416.1 583.4h0M414.5 586.9h0M412.8 590.5h0M411.2 594h0M409.5 597.5h0M407.9 601.1h0M406.2 604.6h0M419.7 584.2h0M418.1 587.6h0M416.5 591.1h0M414.9 594.6h0M413.3 598.1h0M411.7 601.5h0M410.1 605h0M423.3 585h0M421.7 588.4h0M420.2 591.8h0M418.6 595.2h0M417.1 598.6h0M415.5 602h0M413.9 605.5h0M412.4 608.9h0M425.8 588.1h0M424.2 591.6h0M422.6 595.2h0M421 598.7h0M419.4 602.2h0M417.8 605.7h0M416.3 609.2h0M429.2 589h0M427.7 592.4h0M426.2 595.9h0M424.7 599.3h0M423.1 602.7h0M421.6 606.2h0M420.1 609.6h0M418.6 613.1h0M431.6 592.2h0M430 595.7h0M428.5 599.3h0M427 602.8h0M425.5 606.3h0M424 609.8h0M422.4 613.3h0M434.9 593.1h0M433.4 596.5h0M432 600h0M430.6 603.4h0M429.1 606.8h0M427.7 610.3h0M426.3 613.7h0M424.8 617.2h0M437.1 596.4h0M435.7 599.9h0M434.3 603.4h0M432.9 606.9h0M431.5 610.4h0M430.1 613.9h0M428.7 617.4h0M440.7 596.2h0M439.3 599.7h0M438 603.3h0M436.6 606.9h0M435.2 610.5h0M433.9 614.1h0M432.5 617.6h0M431.2 621.2h0M443.7 597.1h0M442.5 600.6h0M441.2 604.1h0M440 607.6h0M438.7 611.1h0M437.5 614.5h0M436.2 618h0M435 621.5h0M445.9 600.5h0M444.7 604.1h0M443.5 607.6h0M442.3 611.1h0M441.1 614.7h0M439.9 618.2h0M438.7 621.7h0M437.5 625.3h0M449.3 600.5h0M448.1 604.1h0M447 607.7h0M445.8 611.2h0M444.7 614.8h0M443.5 618.4h0M442.4 621.9h0M441.2 625.5h0M451.5 604.2h0M450.4 607.8h0M449.3 611.4h0M448.2 615h0M447.1 618.6h0M446 622.1h0M444.9 625.7h0M443.8 629.3h0M454.9 604.5h0M453.8 608.1h0M452.8 611.7h0M451.7 615.2h0M450.7 618.8h0M449.6 622.4h0M448.6 626h0M447.5 629.5h0M458.6 603.8h0M457.6 607.5h0M456.5 611.2h0M455.4 614.9h0M454.4 618.6h0M453.3 622.3h0M452.2 626h0M451.2 629.7h0M450.1 633.4h0M463.9 597.4h0M462.9 601h0M461.9 604.6h0M460.9 608.3h0M459.9 611.9h0M458.8 615.5h0M457.8 619.1h0M456.8 622.8h0M455.8 626.4h0M454.8 630h0M453.8 633.6h0M470.4 585.9h0M469.4 589.6h0M468.4 593.3h0M467.4 597h0M466.4 600.7h0M465.4 604.3h0M464.4 608h0M463.4 611.7h0M462.4 615.4h0M461.4 619.1h0M460.4 622.8h0M459.4 626.4h0M458.4 630.1h0M457.4 633.8h0M456.4 637.5h0M478.9 567.1h0M478 570.6h0M477 574.2h0M476.1 577.7h0M475.1 581.2h0M474.2 584.8h0M473.2 588.3h0M472.3 591.8h0M471.4 595.4h0M470.4 598.9h0M469.5 602.4h0M468.5 606h0M467.6 609.5h0M466.6 613h0M465.7 616.6h0M464.8 620.1h0M463.8 623.7h0M462.9 627.2h0M461.9 630.7h0M461 634.3h0M460 637.8h0M481.5 571.3h0M480.5 574.8h0M479.6 578.3h0M478.7 581.8h0M477.7 585.3h0M476.8 588.8h0M475.8 592.3h0M474.9 595.9h0M473.9 599.4h0M473 602.9h0M472 606.4h0M471.1 609.9h0M470.1 613.4h0M469.2 616.9h0M468.2 620.4h0M467.3 624h0M466.4 627.5h0M465.4 631h0M464.5 634.5h0M463.5 638h0M462.6 641.5h0M483.2 579h0M482.1 582.6h0M481.1 586.3h0M480.1 590h0M479 593.6h0M478 597.3h0M477 601h0M475.9 604.6h0M474.9 608.3h0M473.9 612h0M472.9 615.6h0M471.8 619.3h0M470.8 623h0M469.8 626.7h0M468.7 630.3h0M467.7 634h0M466.7 637.7h0M465.6 641.3h0M485 586.5h0M483.9 590.1h0M482.7 593.8h0M481.6 597.4h0M480.5 601h0M479.4 604.6h0M478.3 608.3h0M477.2 611.9h0M476.1 615.5h0M475 619.2h0M473.9 622.8h0M472.8 626.4h0M471.7 630h0M470.6 633.7h0M469.5 637.3h0M468.4 640.9h0M467.3 644.5h0M484.2 600.8h0M483 604.3h0M481.8 607.9h0M480.6 611.5h0M479.3 615.1h0M478.1 618.7h0M476.9 622.3h0M475.7 625.9h0M474.5 629.4h0M473.3 633h0M472 636.6h0M470.8 640.2h0M469.6 643.8h0M483.9 610.9h0M482.6 614.4h0M481.2 617.9h0M479.9 621.5h0M478.5 625h0M477.1 628.5h0M475.8 632.1h0M474.4 635.6h0M473 639.1h0M471.7 642.7h0M470.3 646.2h0M484.5 617h0M482.9 620.5h0M481.4 624h0M479.9 627.4h0M478.3 630.9h0M476.8 634.4h0M475.2 637.9h0M473.7 641.4h0M472.2 644.9h0M485.3 621.4h0M483.6 624.5h0M482 627.7h0M480.4 630.9h0M478.8 634.1h0M477.2 637.3h0M475.5 640.5h0M473.9 643.7h0M472.3 646.9h0M486.8 623.6h0M485 626.7h0M483.2 629.9h0M481.3 633h0M479.5 636.1h0M477.7 639.3h0M475.8 642.4h0M474 645.6h0M486.3 628.8h0M484.2 631.9h0M482.1 635h0M480.1 638.1h0M478 641.1h0M475.9 644.2h0M473.8 647.3h0M487.5 630.8h0M485.1 633.8h0M482.8 636.9h0M480.4 639.9h0M478 642.9h0M475.6 646h0M487.4 634h0M485 636.8h0M482.5 639.5h0M480 642.2h0M477.5 645h0M475.1 647.7h0M489.8 634.5h0M487.2 637h0M484.6 639.4h0M482.1 641.8h0M479.5 644.3h0M476.9 646.7h0M490.8 636.3h0M487.9 638.7h0M485 641.1h0M482.1 643.5h0M479.1 645.8h0M476.2 648.2h0M490.4 639.2h0M487.3 641.2h0M484.3 643.3h0M481.3 645.4h0M478.3 647.5h0M489.8 641.7h0M486.6 643.5h0M483.5 645.3h0M480.4 647.1h0M477.3 648.9h0M492.3 642.5h0M489.1 644h0M485.9 645.5h0M482.7 647h0M479.4 648.6h0M491.6 644.8h0M488.3 646.1h0M485 647.4h0M481.7 648.6h0M478.4 649.9h0M490.9 647h0M487.5 648h0M484.1 649.1h0M480.7 650.1h0M493.5 648.3h0M490.1 649.1h0M486.6 649.9h0M483.1 650.7h0M479.7 651.5h0M492.8 650.5h0M489.2 651.1h0M485.7 651.7h0M482.1 652.3h0M495.6 652.5h0M492 652.9h0M488.4 653.3h0M484.8 653.8h0M481.2 654.2h0M494.8 655.1h0M491.2 655.4h0M487.5 655.7h0M483.9 655.9h0M497.8 657.6h0M494.1 657.8h0M490.4 658h0M486.6 658.1h0M482.9 658.3h0M497.1 660.5h0M493.3 660.6h0M489.5 660.7h0M485.8 660.8h0M500.1 663.5h0M496.3 663.6h0M492.5 663.6h0M488.7 663.7h0M484.9 663.7h0M501.6 666.7h0M498.1 666.8h0M494.6 666.8h0M491.1 666.8h0M487.6 666.8h0M501.1 670.1h0M497.5 670.1h0M494 670.1h0M490.4 670.1h0M486.9 670.1h0M504 673.4h0M500.4 673.4h0M496.9 673.4h0M493.3 673.4h0M489.7 673.5h0M503.3 676.6h0M499.7 676.6h0M496.1 676.7h0M492.5 676.7h0M488.9 676.7h0M506.2 679.6h0M502.6 679.6h0M498.9 679.6h0M495.3 679.6h0M491.7 679.6h0" fill="none" stroke="url(#wv)" stroke-opacity="0.83" stroke-width="1.95" stroke-linecap="round"/>
<path d="M20 318.5h0M20 321.3h0M20 324.2h0M20 327h0M20 329.8h0M20 332.6h0M20 335.4h0M20 338.3h0M20 341.1h0M20 343.9h0M20 346.8h0M20 349.6h0M20 352.4h0M20 355.2h0M23.8 323.6h0M23.8 326.4h0M23.8 329.3h0M23.8 332.2h0M23.8 335.1h0M23.8 337.9h0M23.8 340.8h0M23.8 343.7h0M23.8 346.6h0M23.8 349.5h0M23.8 352.3h0M23.8 355.2h0M26.8 324.9h0M26.8 327.8h0M26.8 330.6h0M26.8 333.4h0M26.8 336.2h0M26.8 339h0M26.8 341.8h0M26.8 344.6h0M26.8 347.4h0M26.8 350.2h0M26.8 353h0M26.8 355.8h0M29.7 329.1h0M29.7 332h0M29.7 334.9h0M29.7 337.8h0M29.7 340.7h0M29.7 343.5h0M29.7 346.4h0M29.7 349.3h0M29.7 352.2h0M29.7 355.1h0M29.7 358h0M32.5 330.4h0M32.5 333.2h0M32.5 336h0M32.5 338.8h0M32.5 341.6h0M32.5 344.4h0M32.5 347.3h0M32.5 350.1h0M32.5 352.9h0M32.6 355.7h0M32.6 358.5h0M35.3 334.6h0M35.3 337.5h0M35.3 340.4h0M35.3 343.2h0M35.3 346.1h0M35.3 349h0M35.4 351.9h0M35.4 354.8h0M35.4 357.7h0M35.4 360.6h0M38.1 335.9h0M38.1 338.7h0M38.1 341.5h0M38.1 344.3h0M38.1 347.1h0M38.1 349.9h0M38.1 352.7h0M38.2 355.5h0M38.2 358.3h0M38.2 361.2h0M40.9 340.1h0M40.9 343h0M40.9 345.9h0M40.9 348.8h0M40.9 351.7h0M40.9 354.6h0M40.9 357.5h0M40.9 360.4h0M40.9 363.3h0M43.6 341.4h0M43.6 344.2h0M43.6 347h0M43.6 349.9h0M43.7 352.7h0M43.7 355.5h0M43.7 358.3h0M43.7 361.1h0M43.7 363.9h0M43.7 366.7h0M46.3 345.7h0M46.3 348.6h0M46.3 351.5h0M46.3 354.4h0M46.3 357.3h0M46.3 360.2h0M46.3 363.1h0M46.3 366h0M49.1 347.3h0M49.1 350.3h0M49.1 353.2h0M49.1 356.2h0M49 359.2h0M49 362.2h0M49 365.2h0M49 368.2h0M51.8 351.8h0M51.8 354.7h0M51.8 357.5h0M51.8 360.4h0M51.8 363.2h0M51.8 366.1h0M51.7 369h0M51.7 371.8h0M54.6 353.6h0M54.6 356.5h0M54.6 359.4h0M54.5 362.4h0M54.5 365.3h0M54.5 368.3h0M54.4 371.2h0M54.4 374.1h0M57.4 358.3h0M57.3 361.3h0M57.3 364.3h0M57.2 367.4h0M57.2 370.4h0M57.1 373.4h0M57 376.5h0M60.1 360h0M60 362.9h0M60 365.8h0M59.9 368.7h0M59.8 371.5h0M59.8 374.4h0M59.7 377.3h0M62.8 364.8h0M62.7 367.8h0M62.6 370.7h0M62.5 373.7h0M62.4 376.7h0M62.3 379.6h0M65.5 366.7h0M65.4 369.7h0M65.2 372.8h0M65.1 375.9h0M65 378.9h0M64.8 382h0M68.1 371.5h0M67.9 374.3h0M67.8 377.2h0M67.6 380.1h0M67.4 383h0M67.3 385.8h0M70.8 373.4h0M70.6 376.4h0M70.3 379.4h0M70.1 382.3h0M69.9 385.3h0M69.7 388.3h0M73.2 378.3h0M72.9 381.5h0M72.7 384.6h0M72.4 387.7h0M72.1 390.9h0M75.9 380.2h0M75.6 383.1h0M75.3 386h0M75 388.9h0M74.7 391.8h0M78.2 385.2h0M77.8 388.2h0M77.4 391.3h0M77 394.3h0M80.7 387h0M80.3 389.8h0M79.8 392.6h0M79.4 395.4h0M78.9 398.2h0M82.7 391.8h0M82.2 394.7h0M81.6 397.7h0M81 400.7h0M85.2 393.4h0M84.5 396.7h0M83.7 399.9h0M82.9 403.2h0M86.9 398h0M86.1 400.9h0M85.3 403.8h0M84.4 406.7h0M89.3 399.5h0M88.2 402.8h0M87.1 406h0M86 409.3h0M90.7 403.8h0M89.5 406.7h0M88.3 409.6h0M87.1 412.5h0M93.1 405h0M91.8 407.6h0M90.6 410.2h0M89.4 412.8h0M93.9 409.2h0M92.3 412.2h0M90.6 415.3h0M96.2 410.1h0M94.6 412.8h0M93 415.5h0M91.4 418.2h0M96.1 414.7h0M94.2 418.1h0M97.4 415.9h0M96.3 418.7h0M95.3 421.6h0M97.7 421.3h0M100 421.5h0M99.4 425.9h0M101.8 425.5h0M105.8 424.8h0M101.5 428.7h0M107.1 426.9h0M103.9 428.8h0M109.4 428.5h0M106.3 429.7h0M103.2 430.9h0M109.2 430.9h0M105.9 431.8h0M109 433.2h0M105.3 433.9h0M111.3 434.7h0M108 435.2h0M110.8 436.6h0M107.3 437.1h0M110.1 438.5h0M109.1 440.6h0M111.7 442.5h0M110.7 445h0M112.1 450.9h0M261.8 544.8h0M258.5 544.9h0M255.2 545.1h0M262.9 547.4h0M259.6 547.6h0M256.3 547.8h0M252.9 547.9h0M249.6 548.1h0M246.3 548.2h0M243 548.4h0M267.4 549.5h0M264.2 549.7h0M261 549.9h0M257.8 550h0M254.5 550.2h0M251.3 550.3h0M248.1 550.5h0M244.8 550.6h0M241.6 550.8h0M238.4 551h0M235.1 551.1h0M268.8 551.4h0M265.5 551.6h0M262.3 551.8h0M259 552h0M255.8 552.1h0M252.6 552.3h0M249.3 552.5h0M246.1 552.7h0M242.8 552.8h0M239.6 553h0M236.3 553.2h0M233.1 553.4h0M229.8 553.5h0M226.6 553.7h0M273.4 552.9h0M270.1 553.1h0M266.9 553.3h0M263.6 553.5h0M260.4 553.7h0M257.1 553.9h0M253.8 554.1h0M250.6 554.3h0M247.3 554.5h0M244.1 554.7h0M240.8 554.9h0M237.5 555.1h0M234.3 555.2h0M231 555.4h0M227.8 555.6h0M224.5 555.8h0M221.2 556h0M218 556.2h0M274.8 554.4h0M271.7 554.6h0M268.5 554.8h0M265.3 555h0M262.1 555.2h0M259 555.4h0M255.8 555.6h0M252.6 555.9h0M249.5 556.1h0M246.3 556.3h0M243.1 556.5h0M239.9 556.7h0M236.8 556.9h0M233.6 557.1h0M230.4 557.3h0M227.3 557.5h0M224.1 557.7h0M220.9 557.9h0M217.8 558.1h0M214.6 558.3h0M211.4 558.5h0M208.2 558.7h0M205.1 558.9h0M279.4 555.5h0M276.2 555.7h0M273.1 556h0M269.9 556.2h0M266.7 556.4h0M263.5 556.7h0M260.3 556.9h0M257.1 557.1h0M254 557.3h0M250.8 557.6h0M247.6 557.8h0M244.4 558h0M241.2 558.2h0M238 558.5h0M234.9 558.7h0M231.7 558.9h0M228.5 559.2h0M225.3 559.4h0M222.1 559.6h0M218.9 559.8h0M215.8 560.1h0M212.6 560.3h0M209.4 560.5h0M206.2 560.7h0M203 561h0M199.8 561.2h0M196.7 561.4h0M193.5 561.7h0M190.3 561.9h0M280.9 556.7h0M277.8 557h0M274.7 557.2h0M271.6 557.5h0M268.5 557.7h0M265.4 557.9h0M262.3 558.2h0M259.3 558.4h0M256.2 558.7h0M253.1 558.9h0M250 559.1h0M246.9 559.4h0M243.8 559.6h0M240.7 559.9h0M237.6 560.1h0M234.6 560.3h0M231.5 560.6h0M228.4 560.8h0M225.3 561.1h0M222.2 561.3h0M219.1 561.5h0M216 561.8h0M212.9 562h0M209.8 562.3h0M206.8 562.5h0M203.7 562.7h0M200.6 563h0M197.5 563.2h0M194.4 563.5h0M191.3 563.7h0M285.4 557.6h0M282.3 557.9h0M279.2 558.1h0M276.1 558.4h0M273 558.6h0M269.9 558.9h0M266.8 559.2h0M263.7 559.4h0M260.6 559.7h0M257.5 559.9h0M254.4 560.2h0M251.3 560.5h0M248.2 560.7h0M245.1 561h0M242.1 561.2h0M239 561.5h0M235.9 561.8h0M232.8 562h0M229.7 562.3h0M226.6 562.6h0M223.5 562.8h0M220.4 563.1h0M217.3 563.3h0M214.2 563.6h0M211.1 563.9h0M208 564.1h0M204.9 564.4h0M201.8 564.6h0M198.7 564.9h0M195.6 565.2h0M286.7 558.6h0M283.6 558.9h0M280.5 559.2h0M277.4 559.5h0M274.3 559.8h0M271.2 560h0M268.1 560.3h0M265 560.6h0M261.9 560.9h0M258.8 561.2h0M255.7 561.4h0M252.6 561.7h0M249.5 562h0M246.4 562.3h0M243.3 562.6h0M240.2 562.8h0M237.1 563.1h0M234 563.4h0M230.9 563.7h0M227.8 564h0M224.7 564.3h0M221.6 564.5h0M218.5 564.8h0M215.4 565.1h0M212.3 565.4h0M209.2 565.7h0M206.1 565.9h0M203.1 566.2h0M291.2 559.3h0M288.2 559.6h0M285.2 559.9h0M282.2 560.2h0M279.2 560.5h0M276.2 560.8h0M273.2 561.1h0M270.2 561.3h0M267.2 561.6h0M264.2 561.9h0M261.2 562.2h0M258.3 562.5h0M255.3 562.8h0M252.3 563.1h0M249.3 563.4h0M246.3 563.6h0M243.3 563.9h0M240.3 564.2h0M237.3 564.5h0M234.3 564.8h0M231.3 565.1h0M228.3 565.4h0M225.4 565.7h0M222.4 566h0M219.4 566.2h0M216.4 566.5h0M213.4 566.8h0M210.4 567.1h0M207.4 567.4h0M292.6 560.2h0M289.6 560.5h0M286.6 560.8h0M283.6 561.1h0M280.6 561.4h0M277.6 561.7h0M274.6 562h0M271.7 562.3h0M268.7 562.6h0M265.7 562.9h0M262.7 563.2h0M259.7 563.5h0M256.7 563.8h0M253.7 564.1h0M250.7 564.4h0M247.8 564.7h0M244.8 565h0M241.8 565.3h0M238.8 565.6h0M235.8 565.9h0M232.8 566.2h0M229.8 566.6h0M226.8 566.9h0M223.9 567.2h0M220.9 567.5h0M217.9 567.8h0M214.9 568.1h0M296.9 560.5h0M293.8 560.8h0M290.7 561.2h0M287.6 561.5h0M284.5 561.8h0M281.4 562.2h0M278.3 562.5h0M275.2 562.9h0M272.1 563.2h0M269 563.5h0M265.9 563.9h0M262.8 564.2h0M259.7 564.5h0M256.6 564.9h0M253.5 565.2h0M250.4 565.5h0M247.3 565.9h0M244.2 566.2h0M241.1 566.5h0M238 566.9h0M234.9 567.2h0M231.8 567.5h0M228.7 567.9h0M225.6 568.2h0M222.5 568.5h0M219.4 568.9h0M298.3 561.1h0M295.2 561.4h0M292.1 561.8h0M289 562.1h0M285.9 562.5h0M282.8 562.8h0M279.7 563.2h0M276.6 563.5h0M273.5 563.9h0M270.4 564.2h0M267.3 564.6h0M264.2 564.9h0M261.1 565.3h0M258 565.6h0M254.9 566h0M251.8 566.3h0M248.7 566.7h0M245.6 567.1h0M242.5 567.4h0M239.4 567.8h0M236.3 568.1h0M233.2 568.5h0M230.1 568.8h0M227 569.2h0M302.7 561.2h0M299.6 561.6h0M296.5 561.9h0M293.4 562.3h0M290.3 562.7h0M287.2 563h0M284.1 563.4h0M281 563.8h0M277.9 564.1h0M274.8 564.5h0M271.7 564.9h0M268.6 565.3h0M265.5 565.6h0M262.4 566h0M259.3 566.4h0M256.2 566.7h0M253.1 567.1h0M250 567.5h0M246.9 567.8h0M243.9 568.2h0M240.8 568.6h0M237.7 569h0M234.6 569.3h0M231.5 569.7h0M303.9 561.6h0M300.8 562h0M297.7 562.4h0M294.7 562.8h0M291.6 563.1h0M288.5 563.5h0M285.4 563.9h0M282.3 564.3h0M279.2 564.7h0M276.1 565.1h0M273 565.5h0M269.9 565.9h0M266.8 566.3h0M263.8 566.7h0M260.7 567h0M257.6 567.4h0M254.5 567.8h0M251.4 568.2h0M248.3 568.6h0M245.2 569h0M242.1 569.4h0M239 569.8h0M308.3 561.5h0M305.2 562h0M302.1 562.4h0M299 562.8h0M295.9 563.2h0M292.8 563.6h0M289.8 564h0M286.7 564.4h0M283.6 564.8h0M280.5 565.2h0M277.4 565.7h0M274.3 566.1h0M271.2 566.5h0M268.2 566.9h0M265.1 567.3h0M262 567.7h0M258.9 568.1h0M255.8 568.5h0M252.7 568.9h0M249.7 569.3h0M246.6 569.8h0M243.5 570.2h0M309.5 561.9h0M306.4 562.3h0M303.3 562.7h0M300.2 563.2h0M297.2 563.6h0M294.1 564h0M291 564.5h0M287.9 564.9h0M284.9 565.3h0M281.8 565.8h0M278.7 566.2h0M275.6 566.6h0M272.6 567.1h0M269.5 567.5h0M266.4 568h0M263.3 568.4h0M260.3 568.8h0M257.2 569.3h0M254.1 569.7h0M251 570.1h0M313.7 561.7h0M310.6 562.2h0M307.6 562.7h0M304.5 563.1h0M301.4 563.6h0M298.4 564.1h0M295.3 564.5h0M292.2 565h0M289.2 565.4h0M286.1 565.9h0M283.1 566.4h0M280 566.8h0M276.9 567.3h0M273.9 567.7h0M270.8 568.2h0M267.7 568.7h0M264.7 569.1h0M261.6 569.6h0M258.6 570h0M255.5 570.5h0M314.8 562.1h0M311.8 562.6h0M308.7 563.1h0M305.7 563.6h0M302.6 564h0M299.6 564.5h0M296.5 565h0M293.5 565.5h0M290.4 566h0M287.4 566.5h0M284.3 567h0M281.3 567.5h0M278.2 568h0M275.2 568.5h0M272.1 569h0M269.1 569.4h0M266 569.9h0M263 570.4h0M318.9 561.9h0M315.9 562.5h0M312.9 563h0M309.8 563.5h0M306.8 564h0M303.8 564.6h0M300.7 565.1h0M297.7 565.6h0M294.7 566.2h0M291.7 566.7h0M288.6 567.2h0M285.6 567.7h0M282.6 568.3h0M279.6 568.8h0M276.5 569.3h0M273.5 569.8h0M270.5 570.4h0M267.4 570.9h0M319.9 562.4h0M316.9 562.9h0M313.9 563.5h0M310.9 564.1h0M307.9 564.6h0M304.9 565.2h0M301.9 565.8h0M298.9 566.3h0M295.9 566.9h0M292.9 567.5h0M289.9 568h0M287 568.6h0M284 569.2h0M281 569.7h0M278 570.3h0M275 570.9h0M323.7 562.3h0M320.6 562.9h0M317.4 563.6h0M314.3 564.2h0M311.1 564.9h0M308 565.5h0M304.8 566.2h0M301.6 566.8h0M298.5 567.5h0M295.3 568.1h0M292.2 568.8h0M289 569.4h0M285.9 570.1h0M282.7 570.7h0M279.6 571.4h0M324.3 562.8h0M321.2 563.5h0M318.1 564.2h0M315 564.9h0M311.9 565.6h0M308.8 566.3h0M305.7 567h0M302.6 567.7h0M299.5 568.4h0M296.5 569.1h0M293.4 569.8h0M290.3 570.5h0M287.2 571.2h0M327.8 562.6h0M324.8 563.4h0M321.8 564.1h0M318.8 564.9h0M315.8 565.6h0M312.8 566.4h0M309.7 567.1h0M306.7 567.9h0M303.7 568.7h0M300.7 569.4h0M297.7 570.2h0M294.7 570.9h0M291.7 571.7h0M328.2 563.2h0M325 564.1h0M321.8 565h0M318.5 565.9h0M315.3 566.8h0M312.1 567.7h0M308.9 568.6h0M305.7 569.5h0M302.5 570.4h0M299.3 571.3h0M331.7 562.9h0M328.6 563.9h0M325.5 564.9h0M322.4 565.9h0M319.2 566.9h0M316.1 567.9h0M313 568.9h0M309.9 569.9h0M306.7 570.9h0M303.6 571.9h0M332.2 563.6h0M329.2 564.7h0M326.2 565.8h0M323.1 566.9h0M320.1 568.1h0M317.1 569.2h0M314.1 570.3h0M311.1 571.5h0M335.8 563h0M332.9 564.3h0M330 565.6h0M327.1 566.9h0M324.2 568.2h0M321.2 569.5h0M318.3 570.9h0M315.4 572.2h0M336.6 563.7h0M333.9 565.3h0M331.1 566.8h0M328.3 568.4h0M325.5 570h0M322.7 571.5h0M340.6 562.7h0M337.8 564.7h0M335.1 566.6h0M332.4 568.6h0M329.7 570.6h0M327 572.5h0M341.6 563.7h0M338.8 566.3h0M335.9 568.9h0M333.1 571.5h0M345.5 561.9h0M343.1 564.7h0M340.6 567.5h0M338.2 570.3h0M335.7 573.1h0M347.2 562.7h0M344.9 565.8h0M342.7 568.8h0M340.5 571.8h0M351.6 560.2h0M349.8 562.9h0M348 565.6h0M346.3 568.3h0M344.5 571h0M342.7 573.7h0M354.7 560.3h0M352.8 563.4h0M350.8 566.4h0M348.9 569.4h0M346.9 572.5h0M358.8 559.8h0M356.9 562.7h0M354.9 565.7h0M353 568.6h0M351 571.6h0M349.1 574.5h0M359 565h0M357 567.9h0M354.9 570.8h0M352.9 573.7h0M361.1 567.3h0M359 570.2h0M356.8 573.1h0M354.7 576h0M361.3 572.8h0M359.1 575.8h0M365.8 572.8h0M363.8 575.8h0M361.7 578.7h0M368.3 575.4h0M366.2 578.6h0M370.4 578.6h0M368.4 581.8h0M374.4 578.8h0M372.6 581.9h0M376.7 581.9h0M374.8 585.1h0M378.9 585.3h0M382.9 585.3h0M381.1 588.7h0M385.1 588.9h0M387.4 592.4h0M391.4 592.6h0M393.7 596.3h0M400 600.4h0M486.1 582.9h0M487.9 590h0M486.6 593.6h0M485.4 597.2h0M490.8 593.2h0M489.4 596.7h0M488 600.3h0M486.7 603.8h0M485.3 607.3h0M492.2 599.6h0M490.6 603.1h0M489.1 606.5h0M487.5 610h0M486 613.5h0M495 602.2h0M493.4 605.4h0M491.7 608.6h0M490.1 611.8h0M488.5 615h0M486.9 618.2h0M496 607.9h0M494.2 611.1h0M492.3 614.2h0M490.5 617.3h0M488.7 620.5h0M498.8 610.3h0M496.7 613.4h0M494.6 616.5h0M492.5 619.5h0M490.5 622.6h0M488.4 625.7h0M499.4 615.6h0M497 618.6h0M494.6 621.6h0M492.2 624.7h0M489.9 627.7h0M502.2 617.6h0M499.8 620.4h0M497.3 623.1h0M494.8 625.8h0M492.4 628.6h0M489.9 631.3h0M502.6 622.3h0M500 624.8h0M497.5 627.2h0M494.9 629.6h0M492.3 632.1h0M505.5 624.5h0M502.5 626.8h0M499.6 629.2h0M496.7 631.6h0M493.8 634h0M505.5 628.8h0M502.5 630.8h0M499.4 632.9h0M496.4 635h0M493.4 637.1h0M508.5 630.9h0M505.4 632.7h0M502.3 634.5h0M499.1 636.3h0M496 638.1h0M492.9 639.9h0M508.4 634.9h0M505.2 636.4h0M501.9 637.9h0M498.7 639.4h0M495.5 641h0M511.4 637.2h0M508.1 638.5h0M504.8 639.8h0M501.5 641h0M498.2 642.3h0M494.9 643.6h0M511.2 640.9h0M507.8 641.9h0M504.4 642.9h0M501 643.9h0M497.6 645h0M494.2 646h0M514.3 643.5h0M510.8 644.3h0M507.4 645.1h0M503.9 645.9h0M500.4 646.7h0M497 647.5h0M514 646.9h0M510.4 647.5h0M506.9 648.1h0M503.4 648.7h0M499.8 649.3h0M496.3 649.9h0M517.2 649.9h0M513.6 650.3h0M510 650.7h0M506.4 651.2h0M502.8 651.6h0M499.2 652h0M516.8 653.3h0M513.2 653.6h0M509.5 653.9h0M505.8 654.2h0M502.2 654.5h0M498.5 654.8h0M520.1 656.5h0M516.4 656.7h0M512.7 656.9h0M509 657.1h0M505.2 657.2h0M501.5 657.4h0M519.7 659.9h0M515.9 660h0M512.1 660.1h0M508.4 660.2h0M504.6 660.3h0M500.8 660.4h0M523 663.3h0M519.2 663.3h0M515.4 663.4h0M511.6 663.4h0M507.7 663.5h0M503.9 663.5h0M522.7 666.7h0M519.2 666.7h0M515.7 666.7h0M512.2 666.7h0M508.6 666.7h0M505.1 666.7h0M525.8 670h0M522.3 670h0M518.7 670h0M515.2 670h0M511.7 670h0M508.1 670h0M504.6 670.1h0M525.4 673.3h0M521.8 673.3h0M518.3 673.3h0M514.7 673.4h0M511.1 673.4h0M507.6 673.4h0M528.5 676.5h0M524.9 676.5h0M521.3 676.5h0M517.7 676.5h0M514.1 676.6h0M510.5 676.6h0M506.9 676.6h0M528 679.6h0M524.4 679.6h0M520.7 679.6h0M517.1 679.6h0M513.5 679.6h0M509.8 679.6h0" fill="none" stroke="url(#wv)" stroke-opacity="1" stroke-width="1.95" stroke-linecap="round"/>
<g fill="#fff">
<rect x="46.6" y="558.1" width="34" height="34"/>
<path fill="#0c303b" d="M56.7 566.1C56.7 564 57.9 563.1 61 562.7C66 562.1 71 563 75.3 565.2V577.1C73.5 573.5 70 572 66 571C62 570.2 56.9 570 56.7 566.1ZM51.2 572.9C52.5 575.5 55 576.3 59 577C63 577.6 68.9 578.5 68.9 583C68.9 587 65 587.8 61 587.6C57.5 587.4 54 586.7 51.2 585.7Z"/>
<text x="91" y="588" font-family="'Liberation Sans',Arial,sans-serif" font-weight="bold" font-size="36" stroke="#fff" stroke-width=".5" textLength="151.5" lengthAdjust="spacingAndGlyphs">Smartsign</text>
<text x="241" y="569" font-family="'Liberation Sans',Arial,sans-serif" font-size="4" font-weight="bold">TM</text>
</g>
<text x="627.6" y="570.5" text-anchor="end" font-family="'Liberation Sans',Arial,sans-serif" font-size="36" fill="#fff" stroke="#0c303b" stroke-width="1" textLength="80.5" lengthAdjust="spacingAndGlyphs">14:48</text>
<text x="628" y="601.3" text-anchor="end" font-family="'Liberation Sans',Arial,sans-serif" font-size="15.5" fill="#a6b6bb" stroke="#0c303b" stroke-width=".4" textLength="89.3" lengthAdjust="spacingAndGlyphs">2025-09-11</text>
<rect x="46.73" y="184.88" width="595.76" height="335.11" fill="#f4cb00" fill-opacity=".75"/>
<g fill="none" stroke="#fff" stroke-linejoin="miter">
<path d="M341 355H323.7V331L340 319.3 354.8 329.2" stroke-width="4.2"/>
<path d="M346.82 354.08A12.7 12.7 0 1 1 364.78 354.08" stroke-width="3.4"/>
<path d="M350.92 349.98A6.9 6.9 0 1 1 360.68 349.98" stroke-width="3.2"/>
<path d="M355.9 345.1V359.4" stroke-width="4" stroke-linecap="butt"/>
</g><circle cx="355.9" cy="345.1" r="2.6" fill="#fff"/>
<text x="321" y="386.1" font-family="'Liberation Sans',Arial,sans-serif" font-size="20.4" fill="#fff" stroke="#fff" stroke-width=".25" textLength="46.6" lengthAdjust="spacing">Main</text>
<rect x="656.03" y="401.52" width="203.1" height="203.1" fill="#000" fill-opacity=".25"/>
<circle cx="732.9" cy="470.4" r="33.3" fill="#f6b800"/>
<circle cx="732.9" cy="470.4" r="29.3" fill="url(#sun)"/>
<g fill="#b9dff3">
<circle cx="709.6" cy="501.2" r="13"/>
<circle cx="733.75" cy="487.75" r="14"/>
<circle cx="755" cy="485.5" r="26"/>
<circle cx="789" cy="492" r="20.5"/>
<circle cx="806" cy="502.5" r="11.5"/>
<circle cx="730" cy="503" r="11"/>
<circle cx="760" cy="503" r="11"/>
<circle cx="790" cy="503" r="11"/>
<rect x="710" y="495" width="96" height="19"/></g>
<g fill="#fff">
<circle cx="710.5" cy="501" r="9"/>
<circle cx="733.75" cy="489.5" r="10.5"/>
<circle cx="755" cy="487.5" r="21"/>
<circle cx="788.5" cy="493.5" r="16.5"/>
<circle cx="805.5" cy="503" r="8"/>
<circle cx="722" cy="503.5" r="7.5"/>
<circle cx="741" cy="504" r="7.5"/>
<circle cx="760" cy="504.5" r="7.5"/>
<circle cx="779" cy="504" r="7.5"/>
<circle cx="795" cy="503.5" r="7.5"/>
<rect x="712" y="497" width="92" height="10"/></g>
<text x="729" y="575" font-family="'Liberation Sans',Arial,sans-serif" font-weight="bold" font-size="26" fill="#fff" textLength="58" lengthAdjust="spacingAndGlyphs">17°C</text>
<rect x="46.73" y="184.88" width="595.76" height="335.11" fill="none" stroke="#001824" stroke-opacity=".55" stroke-width="1" transform="translate(.8 .8)" stroke-dasharray="1.7 1.7"/><rect x="46.73" y="184.88" width="595.76" height="335.11" fill="none" stroke="#fff" stroke-opacity="0.45" stroke-width="1" stroke-dasharray="1.7 1.7"/>
<rect x="656.03" y="401.52" width="203.1" height="203.1" fill="none" stroke="#001824" stroke-opacity=".55" stroke-width="1" transform="translate(.8 .8)" stroke-dasharray="1.7 1.7"/><rect x="656.03" y="401.52" width="203.1" height="203.1" fill="none" stroke="#fff" stroke-opacity="0.62" stroke-width="1" stroke-dasharray="1.7 1.7"/>
<rect x="46.73" y="523.38" width="203.1" height="108.32" fill="none" stroke="#001824" stroke-opacity=".55" stroke-width="1" transform="translate(.8 .8)" stroke-dasharray="1.7 1.7"/><rect x="46.73" y="523.38" width="203.1" height="108.32" fill="none" stroke="#fff" stroke-opacity="0.62" stroke-width="1" stroke-dasharray="1.7 1.7"/>
<rect x="344.61" y="536.92" width="284.34" height="40.62" fill="none" stroke="#001824" stroke-opacity=".55" stroke-width="1" transform="translate(.8 .8)" stroke-dasharray="1.7 1.7"/><rect x="344.61" y="536.92" width="284.34" height="40.62" fill="none" stroke="#fff" stroke-opacity="0.62" stroke-width="1" stroke-dasharray="1.7 1.7"/>
<path d="M344.61 577.54V604.62H628.95V577.54" fill="none" stroke="#001824" stroke-opacity=".55" stroke-width="1" transform="translate(.8 .8)" stroke-dasharray="1.7 1.7"/>
<path d="M344.61 577.54V604.62H628.95V577.54" fill="none" stroke="#fff" stroke-opacity=".62" stroke-width="1" transform="" stroke-dasharray="1.7 1.7"/>
<path d="M33.5 157.8V645.24M46.5 157.8V645.24M60.5 157.8V645.24M73.5 157.8V645.24M87.5 157.8V645.24M100.5 157.8V645.24M114.5 157.8V645.24M127.5 157.8V645.24M141.5 157.8V645.24M155.5 157.8V645.24M168.5 157.8V645.24M182.5 157.8V645.24M195.5 157.8V645.24M209.5 157.8V645.24M222.5 157.8V645.24M236.5 157.8V645.24M249.5 157.8V645.24M263.5 157.8V645.24M276.5 157.8V645.24M290.5 157.8V645.24M303.5 157.8V645.24M317.5 157.8V645.24M331.5 157.8V645.24M344.5 157.8V645.24M358.5 157.8V645.24M371.5 157.8V645.24M385.5 157.8V645.24M398.5 157.8V645.24M412.5 157.8V645.24M425.5 157.8V645.24M439.5 157.8V645.24M452.5 157.8V645.24M466.5 157.8V645.24M480.5 157.8V645.24M493.5 157.8V645.24M507.5 157.8V645.24M520.5 157.8V645.24M534.5 157.8V645.24M547.5 157.8V645.24M561.5 157.8V645.24M574.5 157.8V645.24M588.5 157.8V645.24M601.5 157.8V645.24M615.5 157.8V645.24M628.5 157.8V645.24M642.5 157.8V645.24M656.5 157.8V645.24M669.5 157.8V645.24M683.5 157.8V645.24M696.5 157.8V645.24M710.5 157.8V645.24M723.5 157.8V645.24M737.5 157.8V645.24M750.5 157.8V645.24M764.5 157.8V645.24M777.5 157.8V645.24M791.5 157.8V645.24M804.5 157.8V645.24M818.5 157.8V645.24M832.5 157.8V645.24M845.5 157.8V645.24M859.5 157.8V645.24M872.5 157.8V645.24" fill="none" stroke="#fff" stroke-opacity=".2" stroke-width="1.4"/>
<path d="M19.65 171.5H886.2M19.65 184.5H886.2M19.65 198.5H886.2M19.65 211.5H886.2M19.65 225.5H886.2M19.65 239.5H886.2M19.65 252.5H886.2M19.65 266.5H886.2M19.65 279.5H886.2M19.65 293.5H886.2M19.65 306.5H886.2M19.65 320.5H886.2M19.65 333.5H886.2M19.65 347.5H886.2M19.65 360.5H886.2M19.65 374.5H886.2M19.65 387.5H886.2M19.65 401.5H886.2M19.65 415.5H886.2M19.65 428.5H886.2M19.65 442.5H886.2M19.65 455.5H886.2M19.65 469.5H886.2M19.65 482.5H886.2M19.65 496.5H886.2M19.65 509.5H886.2M19.65 523.5H886.2M19.65 536.5H886.2M19.65 550.5H886.2M19.65 563.5H886.2M19.65 577.5H886.2M19.65 591.5H886.2M19.65 604.5H886.2M19.65 618.5H886.2M19.65 631.5H886.2" fill="none" stroke="#fff" stroke-opacity=".2" stroke-width="1.4"/>
</g>
<rect x="20.05" y="158.2" width="865.75" height="486.64" fill="none" stroke="#fff" stroke-opacity=".6" stroke-width="1" stroke-dasharray="1.7 1.7"/>
</svg>

<!-- ================= layers panel ================= -->
<div class="abs" id="layers"></div>
<div class="abs" id="layline"></div>
<!-- header icons -->
<svg class="ic" style="left:917px;top:93px;fill:#8a8a8a" width="14" height="14" viewBox="0 0 24 24"><path d="M1 1h4v1h6v2H5v1H4v6H2V5H1V1zm18 0h4v4h-4V1zM1 19h4v4H1v-4zm18 0h4v4h-4v-1h-6v-2h6v-1h1v-6h2v6h-1v0zM6 6h9v4h3v8H8v-4H6V6zm2 2v4h5V8H8zm7 4v2h-5v2h6v-4h-1z"/></svg>
<svg class="ic" style="left:943px;top:92px;fill:#8a8a8a" width="15" height="15" viewBox="0 0 24 24"><path d="M18 8h-1V6c0-2.76-2.24-5-5-5S7 3.24 7 6v2H6c-1.1 0-2 .9-2 2v10c0 1.1.9 2 2 2h12c1.1 0 2-.9 2-2V10c0-1.1-.9-2-2-2zm-6 9c-1.1 0-2-.9-2-2s.9-2 2-2 2 .9 2 2-.9 2-2 2zm3.1-9H8.9V6c0-1.71 1.39-3.1 3.1-3.1 1.71 0 3.1 1.39 3.1 3.1v2z"/></svg>
<svg class="ic" style="left:1069.3px;top:92.8px;fill:#9a9a9a" width="14" height="14" viewBox="0 0 24 24"><path d="M6 19c0 1.1.9 2 2 2h8c1.1 0 2-.9 2-2V7H6v12zM19 4h-3.5l-1-1h-5l-1 1H5v2h14V4z"/></svg>

<!-- row 1 -->
<svg class="abs" style="left:936.3px;top:127.1px" width="16.8" height="15" viewBox="318 312 56 50" fill="none" stroke="#555"><path d="M341 355H323.7V331L340 319.3 354.8 329.2" stroke-width="4.2"/><path d="M346.82 354.08A12.7 12.7 0 1 1 364.78 354.08" stroke-width="3.4"/><path d="M350.92 349.98A6.9 6.9 0 1 1 360.68 349.98" stroke-width="3.2"/><path d="M355.9 345.1V359.4" stroke-width="4"/><circle cx="355.9" cy="345.1" r="2.6" fill="#555" stroke="none"/></svg>
<div class="lrow" style="top:126.7px">Channel area 1</div>
<svg class="abs" style="left:1070.3px;top:130.6px;opacity:.85" width="9.6" height="9.6" viewBox="0 0 11 11" fill="none" stroke="#4caf50" stroke-width="1.1"><path d="M3 8.5V1.2h6.3v4.3M3 8.5a1.3 1.3 0 1 1-1.3-1.3H3M1.5 9.8h4.3M4.5 3h3.3M4.5 4.8h3.3"/><path d="M6.8 9.8l.3-1.5 2.6-2.6 1 1-2.6 2.6z" fill="#3da642" stroke="none"/></svg>

<!-- row 2 -->
<svg class="ic" style="left:936.5px;top:156.4px;fill:#555" width="15" height="15" viewBox="0 0 24 24"><path d="M12 3c-4.97 0-9 4.03-9 9s4.03 9 9 9c.830 0 1.5-.670 1.5-1.5 0-.390-.150-.740-.390-1.01-.230-.260-.380-.610-.380-.990 0-.830.67-1.5 1.5-1.5H16c2.76 0 5-2.24 5-5 0-4.42-4.03-8-9-8zm-5.5 9c-.830 0-1.5-.670-1.5-1.5S5.67 9 6.5 9 8 9.67 8 10.5 7.33 12 6.5 12zm3-4C8.67 8 8 7.33 8 6.5S8.67 5 9.5 5s1.5.670 1.5 1.5S10.33 8 9.5 8zm5 0c-.830 0-1.5-.670-1.5-1.5S13.67 5 14.5 5s1.5.670 1.5 1.5S15.33 8 14.5 8zm3 4c-.830 0-1.5-.670-1.5-1.5S16.67 9 17.5 9s1.5.670 1.5 1.5-.670 1.5-1.5 1.5z"/></svg>
<div class="lrow" style="top:156px">Component area 2</div>
<svg class="abs" style="left:1070.3px;top:159.95px;opacity:.85" width="9.6" height="9.6" viewBox="0 0 11 11" fill="none" stroke="#4caf50" stroke-width="1.1"><path d="M3 8.5V1.2h6.3v4.3M3 8.5a1.3 1.3 0 1 1-1.3-1.3H3M1.5 9.8h4.3M4.5 3h3.3M4.5 4.8h3.3"/><path d="M6.8 9.8l.3-1.5 2.6-2.6 1 1-2.6 2.6z" fill="#3da642" stroke="none"/></svg>

<!-- row 3 -->
<svg class="ic" style="left:936px;top:185.5px;fill:#444" width="15" height="15" viewBox="0 0 24 24"><path d="M7 14c-1.66 0-3 1.34-3 3 0 1.31-1.16 2-2 2 .920 1.22 2.49 2 4 2 2.21 0 4-1.79 4-4 0-1.66-1.34-3-3-3zm13.71-9.37l-1.34-1.34c-.390-.390-1.02-.390-1.41 0L9 12.25 11.75 15l8.96-8.96c.390-.390.39-1.02 0-1.41z"/></svg>
<div class="lrow" style="top:185.4px">Dark background logo</div>

<!-- row 4 -->
<svg class="ic" style="left:936.5px;top:215.3px;fill:#444" width="15" height="15" viewBox="0 0 24 24"><path d="M2.5 4v3h5v12h3V7h5V4h-13zm19 5h-9v3h3v7h3v-7h3V9z"/></svg>
<div class="lrow" style="top:214.8px">Clock</div>

<!-- row 5 -->
<svg class="ic" style="left:936.5px;top:244.6px;fill:#444" width="15" height="15" viewBox="0 0 24 24"><path d="M2.5 4v3h5v12h3V7h5V4h-13zm19 5h-9v3h3v7h3v-7h3V9z"/></svg>
<div class="lrow" style="top:244.1px">Date</div>

<!-- row 6 -->
<svg class="ic" style="left:936px;top:273.6px;fill:#444" width="15" height="15" viewBox="0 0 24 24"><path d="M7 14c-1.66 0-3 1.34-3 3 0 1.31-1.16 2-2 2 .920 1.22 2.49 2 4 2 2.21 0 4-1.79 4-4 0-1.66-1.34-3-3-3zm13.71-9.37l-1.34-1.34c-.390-.390-1.02-.390-1.41 0L9 12.25 11.75 15l8.96-8.96c.390-.390.39-1.02 0-1.41z"/></svg>
<div class="lrow" style="top:273.5px">Background image</div>
<svg class="ic" style="left:1070px;top:276.5px;fill:#555" width="10" height="10" viewBox="0 0 24 24"><path d="M18 8h-1V6c0-2.76-2.24-5-5-5S7 3.24 7 6v2H6c-1.1 0-2 .9-2 2v10c0 1.1.9 2 2 2h12c1.1 0 2-.9 2-2V10c0-1.1-.9-2-2-2zm-6 9c-1.1 0-2-.9-2-2s.9-2 2-2 2 .9 2 2-.9 2-2 2zm3.1-9H8.9V6c0-1.71 1.39-3.1 3.1-3.1 1.71 0 3.1 1.39 3.1 3.1v2z"/></svg>


<!-- ================= top bars ================= -->
<div class="abs" id="toolbar"></div>
<div class="abs" id="topbar"></div>
<div class="abs" id="topline"></div>
<svg class="ic" style="left:16.6px;top:12px" width="16" height="16" viewBox="0 0 24 24"><path d="M20 11H7.83l5.59-5.59L12 4l-8 8 8 8 1.41-1.41L7.83 13H20v-2z"/></svg>
<div class="abs" id="title"><span style="font-size:17px;position:relative;top:-1px;margin-right:1px">*</span>Landscape - components(New)</div>
<svg class="ic" style="left:637.6px;top:12.1px;fill:#a6a6a6" width="11.3" height="11.3" viewBox="0 0 24 24"><path d="M3 17.25V21h3.75L17.81 9.94l-3.75-3.75L3 17.25zM20.71 7.04c.390-.390.39-1.02 0-1.41l-2.34-2.34c-.390-.390-1.02-.390-1.41 0l-1.83 1.83 3.75 3.75 1.83-1.83z"/></svg>

<!-- toolbar row -->
<svg class="ic" style="left:16.8px;top:53.3px" width="16" height="16" viewBox="0 0 24 24"><path d="M17 3H5c-1.11 0-2 .9-2 2v14c0 1.1.89 2 2 2h14c1.1 0 2-.9 2-2V7l-4-4zm-5 16c-1.66 0-3-1.34-3-3s1.34-3 3-3 3 1.34 3 3-1.34 3-3 3zm3-10H5V5h10v4z"/></svg>

<svg class="ic" style="left:546.6px;top:52.9px" width="16" height="16" viewBox="0 0 24 24"><path d="M21 19V5c0-1.1-.9-2-2-2H5c-1.1 0-2 .9-2 2v14c0 1.1.9 2 2 2h14c1.1 0 2-.9 2-2zM8.5 13.5l2.5 3.01L14.5 12l4.5 6H5l3.5-4.5z"/></svg>
<div class="caret" style="left:567.2px;top:60.2px"></div>

<svg class="ic" style="left:592.3px;top:53.1px" width="16" height="16" viewBox="0 0 24 24"><path d="M2.5 2.5h13a1.5 1.5 0 0 1 1.5 1.5v2.4a8.6 8.6 0 0 0-10.6 10.6H4a1.5 1.5 0 0 1-1.5-1.5z"/><circle cx="14.8" cy="14.8" r="6.7"/></svg>
<div class="caret" style="left:612.4px;top:60.2px"></div>

<svg class="ic" style="left:640px;top:53.1px" width="16" height="16" viewBox="0 0 24 24"><path d="M2.5 4v3h5v12h3V7h5V4h-13zm19 5h-9v3h3v7h3v-7h3V9z"/></svg>
<div class="sep" style="left:669.5px"></div>

<!-- channel icon -->
<svg class="abs" style="left:684px;top:54px" width="15.68" height="14" viewBox="318 312 56 50" fill="none" stroke="#484848"><path d="M341 355H323.7V331L340 319.3 354.8 329.2" stroke-width="4.2"/><path d="M346.82 354.08A12.7 12.7 0 1 1 364.78 354.08" stroke-width="3.4"/><path d="M350.92 349.98A6.9 6.9 0 1 1 360.68 349.98" stroke-width="3.2"/><path d="M355.9 345.1V359.4" stroke-width="4"/><circle cx="355.9" cy="345.1" r="2.6" fill="#484848" stroke="none"/></svg>
<div class="sep" style="left:712.5px"></div>

<svg class="ic" style="left:726.6px;top:53.1px;fill:#9e9e9e" width="16" height="16" viewBox="0 0 24 24"><path d="M3 13h2v-2H3v2zm0 4h2v-2H3v2zm2 4v-2H3c0 1.1.89 2 2 2zM3 9h2V7H3v2zm12 12h2v-2h-2v2zm4-18H9c-1.11 0-2 .9-2 2v10c0 1.1.89 2 2 2h10c1.1 0 2-.9 2-2V5c0-1.1-.9-2-2-2zm0 12H9V5h10v10zm-8 6h2v-2h-2v2zm-4 0h2v-2H7v2z"/></svg>
<svg class="ic" style="left:761px;top:53.1px;fill:#9e9e9e" width="16" height="16" viewBox="0 0 24 24"><path d="M9 7H7v2h2V7zm0 4H7v2h2v-2zm0-8c-1.11 0-2 .9-2 2h2V3zm4 12h-2v2h2v-2zm6-12v2h2c0-1.1-.9-2-2-2zm-6 0h-2v2h2V3zM9 17v-2H7c0 1.1.89 2 2 2zm10-4h2v-2h-2v2zm0-4h2V7h-2v2zm0 8c1.1 0 2-.9 2-2h-2v2zM5 7H3v12c0 1.1.89 2 2 2h12v-2H5V7zm10-2h2V3h-2v2zm0 12h2v-2h-2v2z"/></svg>
<div class="ttxt" style="left:796px;color:#9e9e9e">Align</div>
<div class="caret" style="left:824.6px;top:60.2px;border-top-color:#9e9e9e"></div>
<div class="sep" style="left:847px"></div>

<svg class="ic" style="left:860.3px;top:52.6px" width="18" height="18" viewBox="0 0 24 24"><path d="M12.5 8c-2.65 0-5.05.99-6.9 2.6L2 7v9h9l-3.62-3.62c1.39-1.16 3.16-1.88 5.12-1.88 3.54 0 6.55 2.31 7.6 5.5l2.37-.78C21.08 11.03 17.15 8 12.5 8z"/></svg>
<svg class="ic" style="left:895.1px;top:52.6px;fill:#a8a8a8" width="18" height="18" viewBox="0 0 24 24"><path d="M18.4 10.6C16.55 8.99 14.15 8 11.5 8c-4.65 0-8.58 3.03-9.96 7.22L3.9 16c1.05-3.19 4.05-5.5 7.6-5.5 1.95 0 3.73.72 5.12 1.88L13 16h9V7l-3.6 3.6z"/></svg>
<div class="sep" style="left:925.3px"></div>

<div class="ttxt" style="left:939px">Fit</div>
<div class="caret" style="left:956px;top:60.2px"></div>
<svg class="ic" style="left:983.4px;top:53.3px" width="16" height="16" viewBox="0 0 24 24"><path d="M19 3H5c-1.11 0-2 .9-2 2v14c0 1.1.89 2 2 2h14c1.1 0 2-.9 2-2V5c0-1.1-.89-2-2-2zm0 16H5V7h14v12zm-5.5-6c0 .830-.670 1.5-1.5 1.5s-1.5-.670-1.5-1.5.670-1.5 1.5-1.5 1.5.670 1.5 1.5zM12 9c-2.73 0-5.06 1.66-6 4 .940 2.34 3.27 4 6 4s5.06-1.66 6-4c-.940-2.34-3.27-4-6-4zm0 6.5c-1.38 0-2.5-1.12-2.5-2.5s1.12-2.5 2.5-2.5 2.5 1.12 2.5 2.5-1.12 2.5-2.5 2.5z"/></svg>
<div class="sep" style="left:1013px"></div>

<div class="tbtn" style="left:1021.4px"></div>
<svg class="ic" style="left:1026.6px;top:53.6px;fill:#3c3c3c" width="16" height="16" viewBox="0 0 24 24"><path d="M11.99 18.54l-7.37-5.73L3 14.07l9 7 9-7-1.63-1.27-7.38 5.74zM12 16l7.36-5.73L21 9l-9-7-9 7 1.63 1.27L12 16z"/></svg>
<div class="tbtn" style="left:1056.2px"></div>
<svg class="abs" style="left:1061.4px;top:53.3px" width="16" height="16" viewBox="0 0 16 16" fill="none" stroke="#555" stroke-width="1.1"><path d="M5 2v12M11 2v12M2.8 10.3h4.4M8.8 5.7h4.4"/></svg>


<!-- ================= settings panel ================= -->
<div class="abs" id="panel"></div>
<div class="abs" id="pscroll"></div>
<div class="abs" id="pthumb"></div>
<svg class="abs" style="left:1132.9px;top:10.4px" width="16" height="16" viewBox="0 0 24 24" fill="#565656"><path d="M19.14 12.94c.040-.3.06-.610.06-.940 0-.320-.020-.640-.070-.940l2.03-1.58c.180-.140.23-.410.12-.610l-1.92-3.32c-.120-.220-.370-.290-.590-.220l-2.39.96c-.5-.380-1.03-.7-1.62-.940l-.360-2.54c-.040-.240-.240-.410-.480-.410h-3.84c-.240 0-.430.17-.470.41l-.360 2.54c-.590.24-1.13.570-1.62.940l-2.39-.96c-.220-.080-.470 0-.590.22L2.74 8.87c-.12.21-.08.47.12.61l2.03 1.58c-.05.3-.09.63-.09.94s.020.64.070.94l-2.03 1.58c-.180.14-.230.41-.120.61l1.92 3.32c.120.22.370.29.590.22l2.39-.96c.5.38 1.03.7 1.62.940l.360 2.54c.05.24.240.41.480.41h3.84c.240 0 .440-.170.47-.410l.360-2.54c.590-.240 1.13-.560 1.62-.940l2.39.96c.220.08.470 0 .590-.220l1.92-3.32c.12-.220.07-.470-.12-.610l-2.01-1.58zM12 15.6c-1.98 0-3.6-1.62-3.6-3.6s1.62-3.6 3.6-3.6 3.6 1.62 3.6 3.6-1.62 3.6-3.6 3.6z"/></svg>
<div class="ptext" style="left:1155px;top:11.2px;font-size:9.7px;color:#555">Template settings</div>

<!-- Size -->
<div class="ptitle" style="top:50.8px">Size</div>
<svg class="chev" style="top:57.5px" viewBox="0 0 10 6"><path d="M1.8 5 5.2 1.6 8.6 5" fill="none" stroke="#444" stroke-width="1.15"/></svg>
<div class="plabel" style="top:81.8px">Width</div>
<div class="pin" style="left:1109px;top:96px;width:145px;height:21px">1920</div>
<svg class="spin" style="left:1240.5px;top:100.5px" viewBox="0 0 8 14"><path d="M1.2 4.5 4 1.5 6.8 4.5zM1.2 9.5 4 12.5 6.8 9.5z" fill="#9a9a9a"/></svg>
<div class="plabel" style="top:119.4px">Height</div>
<div class="pin" style="left:1109px;top:134px;width:145px;height:21px">1080</div>
<svg class="spin" style="left:1240.5px;top:138px" viewBox="0 0 8 14"><path d="M1.2 4.5 4 1.5 6.8 4.5zM1.2 9.5 4 12.5 6.8 9.5z" fill="#9a9a9a"/></svg>
<div class="pline" style="top:165px"></div>

<!-- Background -->
<div class="ptitle" style="top:179.8px">Background</div>
<svg class="chev" style="top:186px" viewBox="0 0 10 6"><path d="M1.8 5 5.2 1.6 8.6 5" fill="none" stroke="#444" stroke-width="1.15"/></svg>
<div class="plabel" style="top:207.9px">Background color</div>
<div class="abs" style="left:1109px;top:222px;width:40px;height:21px;background:#0e3440;border:1px solid #1a1a1a;border-radius:2.5px"></div>
<div class="ptext" style="left:1155px;top:225px;font-size:9.1px;color:#333">Dark 2</div>
<div class="pline" style="top:254px"></div>

<!-- Grid -->
<div class="ptitle" style="top:268.3px">Grid</div>
<svg class="chev" style="top:274.8px" viewBox="0 0 10 6"><path d="M1.8 5 5.2 1.6 8.6 5" fill="none" stroke="#444" stroke-width="1.15"/></svg>
<div class="plabel" style="top:301.1px">Grid size</div>
<div class="pin" style="left:1182px;top:298px;width:72px;height:20px;padding-left:9.5px;line-height:18px">30</div>
<svg class="spin" style="left:1240.5px;top:301.5px" viewBox="0 0 8 14"><path d="M1.2 4.5 4 1.5 6.8 4.5zM1.2 9.5 4 12.5 6.8 9.5z" fill="#9a9a9a"/></svg>

<div class="chk" style="top:320.4px"></div>
<svg class="abs" style="left:1109px;top:320.4px" width="11" height="11" viewBox="0 0 11 11"><path d="M2.3 5.7 4.5 7.9 8.8 3.3" fill="none" stroke="#fff" stroke-width="1.4"/></svg>
<div class="ptext" style="left:1125.4px;top:317.8px;font-size:9.6px">Show grid</div>
<div class="chk" style="top:347.4px"></div>
<svg class="abs" style="left:1109px;top:347.4px" width="11" height="11" viewBox="0 0 11 11"><path d="M2.3 5.7 4.5 7.9 8.8 3.3" fill="none" stroke="#fff" stroke-width="1.4"/></svg>
<div class="ptext" style="left:1125.4px;top:345.2px;font-size:9.6px">Snap to grid</div>
<div class="chk" style="top:373.9px"></div>
<svg class="abs" style="left:1109px;top:373.9px" width="11" height="11" viewBox="0 0 11 11"><path d="M2.3 5.7 4.5 7.9 8.8 3.3" fill="none" stroke="#fff" stroke-width="1.4"/></svg>
<div class="ptext" style="left:1125.4px;top:372px;font-size:9.7px">Show item outlines</div>
<div class="pline" style="top:410px"></div>

<!-- Theme -->
<div class="ptitle" style="top:424.4px">Theme</div>
<svg class="chev" style="top:431.2px" viewBox="0 0 10 6"><path d="M1.8 5 5.2 1.6 8.6 5" fill="none" stroke="#444" stroke-width="1.15"/></svg>
<div class="ptext" style="left:1109px;top:452.5px;font-size:9.8px;color:#555">Active template theme</div>
<svg class="abs" style="left:1109.9px;top:483.1px" width="15" height="15" viewBox="0 0 15 15"><circle cx="7.5" cy="7.5" r="6.2" fill="#fff" stroke="#4caf50" stroke-width="1.3"/><circle cx="7.5" cy="7.5" r="3.4" fill="#4caf50"/></svg>
<div class="ptext" style="left:1130.8px;top:476.7px;font-size:10.6px;color:#424242">Default theme</div>
<div class="ptext" style="left:1130.8px;top:490px;font-size:9.4px;color:#b5b5b5">Smartsign</div>
<svg class="abs" style="left:1109.6px;top:515.4px" width="15" height="15" viewBox="0 0 15 15"><circle cx="7.5" cy="7.5" r="6.2" fill="#fff" stroke="#444" stroke-width="1.2"/></svg>
<div class="ptext" style="left:1130.8px;top:515.1px;font-size:10.6px;color:#424242">Select theme</div>
<div class="ptext" style="left:1172.4px;top:540.8px;font-size:9.2px;color:#666">Manage <span style="color:#388e3c;-webkit-text-stroke:.3px #388e3c">themes</span></div>
<svg class="abs" style="left:1242.2px;top:543.1px" width="9.2" height="9.2" viewBox="0 0 24 24" fill="#5cb860"><path d="M19 19H5V5h7V3H5c-1.11 0-2 .9-2 2v14c0 1.1.89 2 2 2h14c1.1 0 2-.9 2-2v-7h-2v7zM14 3v2h3.59l-9.83 9.83 1.41 1.41L19 6.41V10h2V3h-7z"/></svg>
<div class="pline" style="top:565px"></div>

<!-- Custom fonts -->
<div class="ptitle" style="top:579.8px">Custom fonts</div>
<svg class="chev" style="top:586.3px" viewBox="0 0 10 6"><path d="M1.8 5 5.2 1.6 8.6 5" fill="none" stroke="#444" stroke-width="1.15"/></svg>
<div class="ptext" style="left:1109px;top:607.6px;font-size:10px;color:#666">Add custom fonts</div>
<div class="abs" style="left:1109px;top:643.5px;width:145px;height:26px;background:#4caf50;border-radius:2px;color:#fff;font-weight:bold;font-size:9px;line-height:26px;text-align:center;letter-spacing:0">ADD FONT</div>
<div class="pline" style="top:686px"></div>

<!-- Datasources -->
<div class="ptitle" style="top:697.6px">Datasources</div>
<svg class="chev" style="top:703px" viewBox="0 0 10 6"><path d="M1.8 1 5.2 4.4 8.6 1" fill="none" stroke="#444" stroke-width="1.15"/></svg>

<!-- scrollbar arrows -->
<svg class="abs" style="left:1272px;top:3.3px" width="6" height="4.5" viewBox="0 0 7 5"><path d="M3.5 0 7 5H0z" fill="#7a7a7a"/></svg>
<svg class="abs" style="left:1272.3px;top:712.6px" width="6" height="4.5" viewBox="0 0 7 5"><path d="M0 0H7L3.5 5z" fill="#7a7a7a"/></svg>

</body>
</html>
